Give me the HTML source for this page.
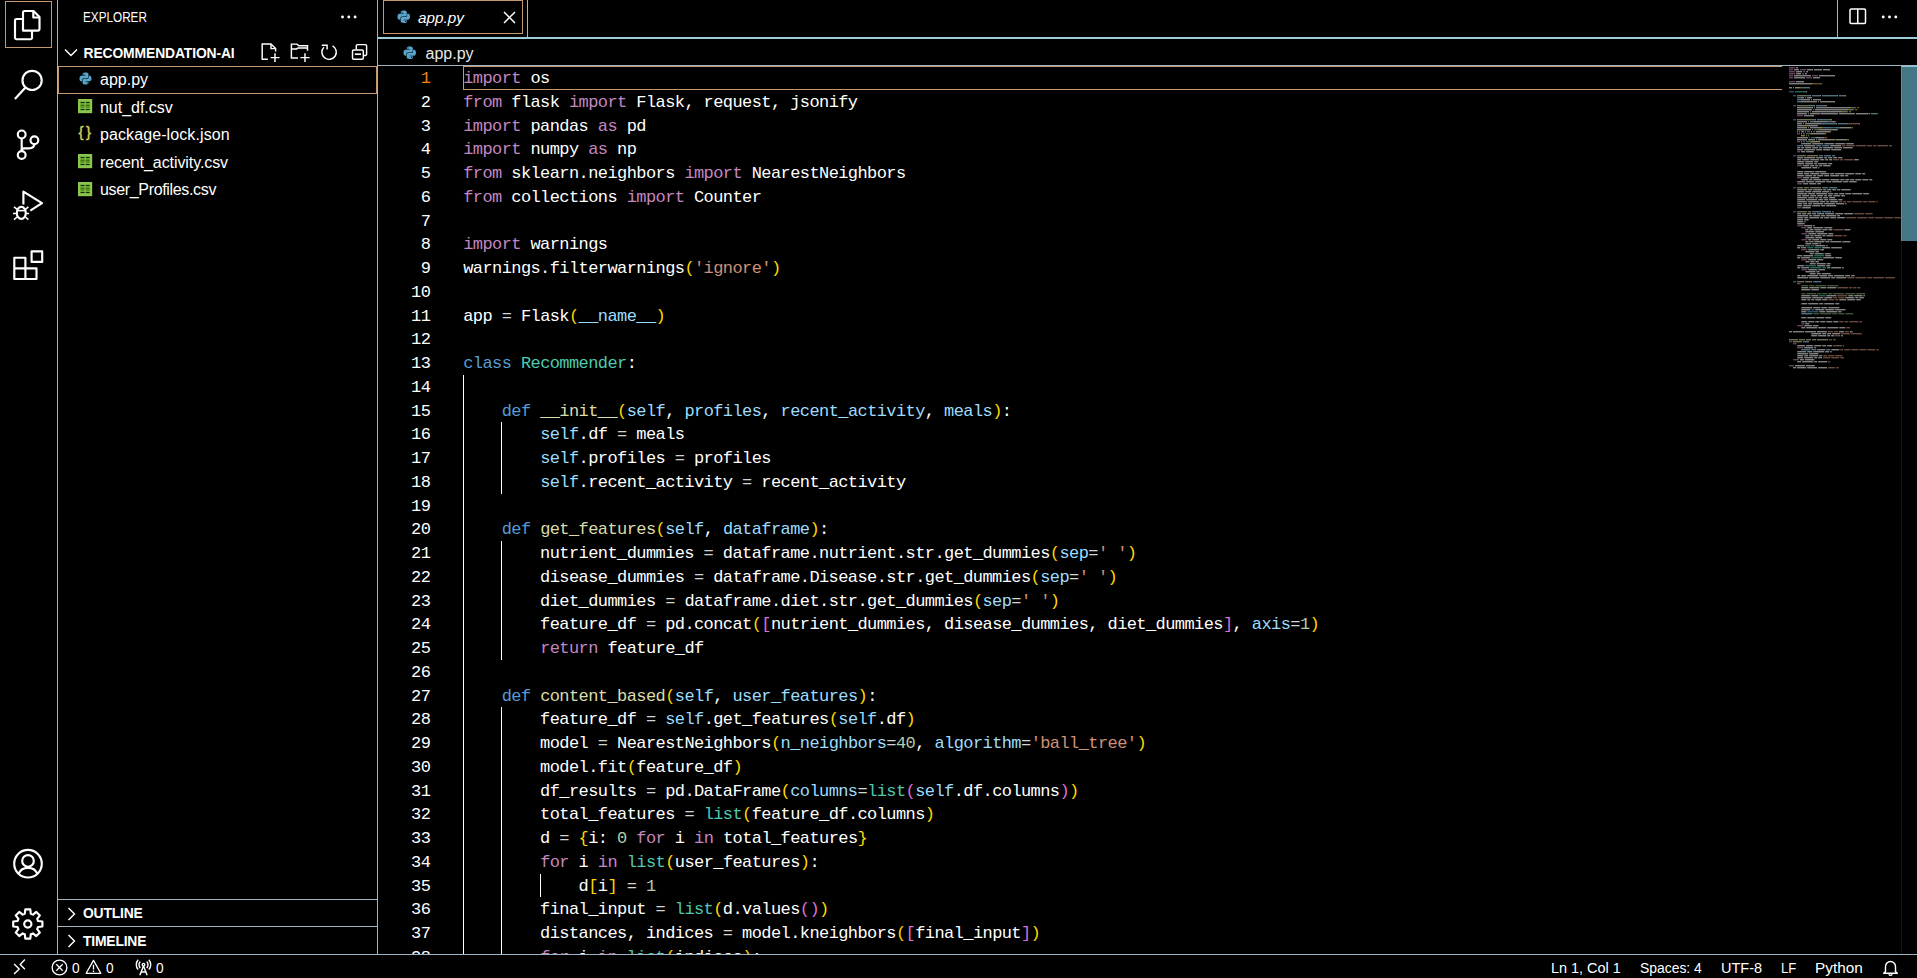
<!DOCTYPE html>
<html lang="en">
<head>
<meta charset="utf-8">
<title>app.py - recommendation-ai - Visual Studio Code</title>
<style>
html,body{margin:0;padding:0;background:#000;}
body{width:1917px;height:978px;overflow:hidden;position:relative;color:#fff;font-family:"Liberation Sans",sans-serif;font-size:15.4px;}
*{box-sizing:border-box;}
.abs{position:absolute;}
svg{display:block;overflow:visible;}
:root{--bd:#a0b6c4;--bd2:#9dcddb;--fo:#c4986a;}
/* activity bar */
#act{left:0;top:0;width:58px;height:954px;border-right:1px solid var(--bd);}
#act .sel{left:5px;top:1px;width:47px;height:47px;border:1px solid var(--fo);}
#act svg{position:absolute;}
/* sidebar */
#side{left:58px;top:0;width:320px;height:954px;border-right:1px solid var(--bd);}
#side .ttl{left:25px;top:8px;font-size:14px;line-height:18px;transform-origin:0 50%;transform:scaleX(.838);white-space:nowrap;}
#side .hdr{left:25.5px;top:44px;font-size:13.9px;line-height:18px;font-weight:bold;letter-spacing:-0.13px;}
.frow{left:0;width:319px;height:28px;}
.frow .nm{position:absolute;left:42px;top:5px;line-height:20px;white-space:nowrap;font-size:16px;}
.frow.sel{border:1px solid var(--fo);}
.pane{left:0;width:319px;border-top:1px solid var(--bd);}
.pane .nm{position:absolute;left:25px;top:5px;font-size:13.9px;line-height:18px;font-weight:bold;letter-spacing:-0.2px;}
/* editor */
#tabs{left:378px;top:0;width:1539px;height:39px;border-bottom:2px solid var(--bd2);}
#tab{left:0;top:0;width:150px;height:37px;border-right:1px solid var(--bd);}
#tab .box{left:5px;top:0;width:140px;height:34px;border:1px solid var(--fo);}
#tab .nm{left:40px;top:8px;font-style:italic;line-height:20px;font-size:15.3px;}
#crumbs{left:378px;top:39px;width:1539px;height:27px;border-bottom:1px solid var(--bd);}
#crumbs .nm{left:47.5px;top:5px;line-height:20px;font-size:16px;color:#e8e8e8;}
#code{left:378px;top:66px;width:1410px;height:888px;overflow:hidden;font-family:"Liberation Mono",monospace;font-size:17px;letter-spacing:-0.5853px;}
.row{position:absolute;left:0;height:23.75px;line-height:23.75px;white-space:pre;width:1410px;}
.ln{position:absolute;left:0;width:52.3px;text-align:right;color:#fff;}
.ln.cur{color:#f38518;}
.tx{position:absolute;left:85.2px;}
.k{color:#c586c0}.b{color:#569cd6}.t{color:#4ec9b0}.s{color:#ce9178}.n{color:#b5cea8}.v{color:#9cdcfe}.f{color:#dcdcaa}.y{color:#ffd700}.p{color:#da70d6}.c{color:#87cefa}.o{color:#d4d4d4}
.g{position:absolute;width:1px;background:#fff;}
#curline{left:85px;top:0;width:1319px;height:24px;border:1px solid var(--fo);border-right:none;}
/* minimap + scrollbar */
#mini{left:1788px;top:66px;width:113px;height:888px;overflow:hidden;}
#scroll{left:1901px;top:66px;width:16px;height:175px;background:#447686;border-top:1px solid #8fc5d8;border-left:1px solid #5f8d9c;}
#sbl{left:1901px;top:241px;width:1px;height:713px;background:#141414;}
/* status */
#status{left:0;top:954px;width:1917px;height:24px;border-top:1px solid var(--bd);font-size:15.2px;}
#status .it{position:absolute;top:3.5px;line-height:18px;white-space:nowrap;transform-origin:0 50%;}
</style>
</head>
<body>
<div id="act" class="abs"><div class="sel abs"></div>
<svg width="57" height="953" viewBox="0 0 57 953" style="left:0;top:0">
<g fill="none" stroke="#fff" stroke-width="2.15" stroke-linejoin="round" stroke-linecap="butt">
<path d="M23 30.6V12.5a1.5 1.5 0 0 1 1.5-1.5h9l6 6V29.1a1.5 1.5 0 0 1-1.5 1.5z"/>
<path d="M33.3 11.5v6h6"/>
<path d="M22.5 19h-6a1.5 1.5 0 0 0-1.5 1.5v17.2a1.5 1.5 0 0 0 1.5 1.5h14a1.5 1.5 0 0 0 1.5-1.5V31"/>
<circle cx="32.1" cy="80.4" r="9.6"/>
<path d="M25.5 87.4L14.9 99"/>
<circle cx="21.7" cy="134.4" r="3.9"/><circle cx="34.4" cy="140.2" r="3.9"/><circle cx="21.7" cy="155" r="3.9"/>
<path d="M21.7 138.2V151"/><path d="M34.4 144.1c0 2.9-2.3 4.2-5.4 4.2H24.2c-1.5 0-2.5 0.7-2.5 2"/>
<path d="M23.4 204.5V191.6L42 203.2L30.3 210.6"/>
<ellipse cx="21.3" cy="212.9" rx="4.5" ry="6"/>
<path d="M17 210.6H25.6" stroke-width="1.6"/>
<path d="M16.8 213.5H13M17.2 209.3L14 206.8M17.2 217L14 219.6M25.8 213.5H29M25.4 209.3L28.4 206.8M25.4 217L28.4 219.6" stroke-width="1.6"/>
<path d="M14.3 257.7H25.4V268.3H36.5V279H14.3zM14.3 268.3H25.4V279"/>
<rect x="31.6" y="251.3" width="10.6" height="10.6"/>
<circle cx="28" cy="863.7" r="13.8"/><circle cx="28" cy="860.9" r="5.8"/>
<path d="M18.6 873.7c1.7-3.8 5-5.8 9.4-5.8s7.7 2 9.4 5.8"/>
<path d="M24.81 913.72 L25.31 909.41 L30.29 909.41 L30.79 913.72 L32.95 914.62 L36.36 911.92 L39.88 915.44 L37.18 918.85 L38.08 921.01 L42.39 921.51 L42.39 926.49 L38.08 926.99 L37.18 929.15 L39.88 932.56 L36.36 936.08 L32.95 933.38 L30.79 934.28 L30.29 938.59 L25.31 938.59 L24.81 934.28 L22.65 933.38 L19.24 936.08 L15.72 932.56 L18.42 929.15 L17.52 926.99 L13.21 926.49 L13.21 921.51 L17.52 921.01 L18.42 918.85 L15.72 915.44 L19.24 911.92 L22.65 914.62Z"/>
<circle cx="27.8" cy="924" r="3.6"/>
</g></svg></div>
<div id="side" class="abs">
<div class="ttl abs">EXPLORER</div>
<svg class="abs" style="left:282px;top:14px" width="18" height="6" viewBox="0 0 18 6"><circle cx="2.5" cy="3" r="1.45" fill="#fff"/><circle cx="8.8" cy="3" r="1.45" fill="#fff"/><circle cx="15.1" cy="3" r="1.45" fill="#fff"/></svg>
<svg class="abs" style="left:5.6px;top:48.4px" width="14" height="10" viewBox="0 0 14 10"><path d="M1 1.5L7 7.5L13 1.5" fill="none" stroke="#fff" stroke-width="1.45" stroke-linejoin="miter" stroke-width="1.5"/></svg>
<div class="hdr abs">RECOMMENDATION-AI</div>
<svg class="abs" style="left:0;top:0" width="319" height="66" viewBox="58 0 319 66"><g fill="none" stroke="#fff" stroke-width="1.45" stroke-linejoin="miter">
<path d="M267.8 59.2H262.2V44H271L275.6 48.6V51.4"/><path d="M271 44.2V48.6H275.4"/><path d="M275 53.2V62.1M270.6 57.6H279.5"/>
<path d="M298 58H291.4V44.1H297L298.8 45.8H307.5V50.8"/><path d="M291.4 48.9H296.6L298 47.9H307.5"/><path d="M305 53.2V62.1M300.5 57.6H309.6"/>
<path d="M332.6 45.9A7.2 7.2 0 1 1 323.9 47.2"/><path d="M321.8 45.2H327.1V49.6"/>
<path d="M356.3 49.6V45.8a1.2 1.2 0 0 1 1.2-1.2H365.4a1.2 1.2 0 0 1 1.2 1.2V54.2a1.2 1.2 0 0 1-1.2 1.2H363.6"/><rect x="352.5" y="50" width="10.8" height="9.2" rx="1.2"/><path d="M354.8 54.2H361" stroke-width="1.7"/>
</g></svg>
<div class="frow abs sel" style="top:66px"><svg class="abs" style="left:19.5px;top:4.5px" width="13" height="13" viewBox="0 0 16 16"><path fill="#58a4ca" fill-rule="evenodd" d="M7.9 0.6C4.2 0.6 4.4 2.2 4.4 2.2V3.9H8V4.5H3C3 4.5 0.6 4.2 0.6 7.9C0.6 11.6 2.7 11.5 2.7 11.5H4V9.7C4 9.7 3.9 7.6 6.1 7.6H9.6C9.6 7.6 11.6 7.6 11.6 5.6V2.6C11.6 2.6 11.9 0.6 7.9 0.6ZM5.9 1.7a0.7 0.7 0 1 1 0 1.4a0.7 0.7 0 0 1 0-1.4z"/><path fill="#58a4ca" fill-rule="evenodd" transform="rotate(180 8 8)" d="M7.9 0.6C4.2 0.6 4.4 2.2 4.4 2.2V3.9H8V4.5H3C3 4.5 0.6 4.2 0.6 7.9C0.6 11.6 2.7 11.5 2.7 11.5H4V9.7C4 9.7 3.9 7.6 6.1 7.6H9.6C9.6 7.6 11.6 7.6 11.6 5.6V2.6C11.6 2.6 11.9 0.6 7.9 0.6ZM5.9 1.7a0.7 0.7 0 1 1 0 1.4a0.7 0.7 0 0 1 0-1.4z"/></svg><span class="nm" style="left:41px;top:3px;letter-spacing:0px">app.py</span></div>
<div class="frow abs" style="top:93.5px"><svg class="abs" style="left:20px;top:5.5px" width="14.2" height="14.2" viewBox="0 0 15 15"><rect x="0" y="0" width="15" height="15" fill="#8cc54c"/><g fill="#5f9a26"><rect x="2.6" y="5" width="4.3" height="4.6"/><rect x="8.1" y="5" width="4.3" height="4.6"/></g><g fill="#123600"><rect x="2.6" y="3" width="4.3" height="1.4"/><rect x="8.1" y="3" width="4.3" height="1.4"/><rect x="2.6" y="6.7" width="4.3" height="0.9" fill="#2f6a08"/><rect x="8.1" y="6.7" width="4.3" height="0.9" fill="#2f6a08"/><rect x="2.6" y="10.4" width="4.3" height="1.4"/><rect x="8.1" y="10.4" width="4.3" height="1.4"/></g></svg><span class="nm" style="left:42px;top:4px;letter-spacing:-0.03px">nut_df.csv</span></div>
<div class="frow abs" style="top:121px"><span class="abs" style="left:20.5px;top:0.5px;line-height:20px;font-size:15px;font-weight:normal;color:#d6cf5c;-webkit-text-stroke:0.4px #d6cf5c;letter-spacing:2.6px">{}</span><span class="nm" style="left:42px;top:4px;letter-spacing:0.1px">package-lock.json</span></div>
<div class="frow abs" style="top:148.5px"><svg class="abs" style="left:20px;top:5.5px" width="14.2" height="14.2" viewBox="0 0 15 15"><rect x="0" y="0" width="15" height="15" fill="#8cc54c"/><g fill="#5f9a26"><rect x="2.6" y="5" width="4.3" height="4.6"/><rect x="8.1" y="5" width="4.3" height="4.6"/></g><g fill="#123600"><rect x="2.6" y="3" width="4.3" height="1.4"/><rect x="8.1" y="3" width="4.3" height="1.4"/><rect x="2.6" y="6.7" width="4.3" height="0.9" fill="#2f6a08"/><rect x="8.1" y="6.7" width="4.3" height="0.9" fill="#2f6a08"/><rect x="2.6" y="10.4" width="4.3" height="1.4"/><rect x="8.1" y="10.4" width="4.3" height="1.4"/></g></svg><span class="nm" style="left:42px;top:4px;letter-spacing:-0.08px">recent_activity.csv</span></div>
<div class="frow abs" style="top:176px"><svg class="abs" style="left:20px;top:5.5px" width="14.2" height="14.2" viewBox="0 0 15 15"><rect x="0" y="0" width="15" height="15" fill="#8cc54c"/><g fill="#5f9a26"><rect x="2.6" y="5" width="4.3" height="4.6"/><rect x="8.1" y="5" width="4.3" height="4.6"/></g><g fill="#123600"><rect x="2.6" y="3" width="4.3" height="1.4"/><rect x="8.1" y="3" width="4.3" height="1.4"/><rect x="2.6" y="6.7" width="4.3" height="0.9" fill="#2f6a08"/><rect x="8.1" y="6.7" width="4.3" height="0.9" fill="#2f6a08"/><rect x="2.6" y="10.4" width="4.3" height="1.4"/><rect x="8.1" y="10.4" width="4.3" height="1.4"/></g></svg><span class="nm" style="left:42px;top:4px;letter-spacing:-0.34px">user_Profiles.csv</span></div>
<div class="pane abs" style="top:899px;height:28px"><svg class="abs" style="left:8.5px;top:7px" width="9" height="14" viewBox="0 0 9 14"><path d="M1.5 1L7.5 7L1.5 13" fill="none" stroke="#fff" stroke-width="1.45" stroke-linejoin="miter" stroke-width="1.5"/></svg><span class="nm" style="top:4px">OUTLINE</span></div>
<div class="pane abs" style="top:926px;height:28px"><svg class="abs" style="left:8.5px;top:7px" width="9" height="14" viewBox="0 0 9 14"><path d="M1.5 1L7.5 7L1.5 13" fill="none" stroke="#fff" stroke-width="1.45" stroke-linejoin="miter" stroke-width="1.5"/></svg><span class="nm" style="top:5px">TIMELINE</span></div>
</div>
<div id="tabs" class="abs"><div id="tab" class="abs"><div class="box abs"></div><svg class="abs" style="left:19px;top:10px" width="13.5" height="13.5" viewBox="0 0 16 16"><path fill="#58a4ca" fill-rule="evenodd" d="M7.9 0.6C4.2 0.6 4.4 2.2 4.4 2.2V3.9H8V4.5H3C3 4.5 0.6 4.2 0.6 7.9C0.6 11.6 2.7 11.5 2.7 11.5H4V9.7C4 9.7 3.9 7.6 6.1 7.6H9.6C9.6 7.6 11.6 7.6 11.6 5.6V2.6C11.6 2.6 11.9 0.6 7.9 0.6ZM5.9 1.7a0.7 0.7 0 1 1 0 1.4a0.7 0.7 0 0 1 0-1.4z"/><path fill="#58a4ca" fill-rule="evenodd" transform="rotate(180 8 8)" d="M7.9 0.6C4.2 0.6 4.4 2.2 4.4 2.2V3.9H8V4.5H3C3 4.5 0.6 4.2 0.6 7.9C0.6 11.6 2.7 11.5 2.7 11.5H4V9.7C4 9.7 3.9 7.6 6.1 7.6H9.6C9.6 7.6 11.6 7.6 11.6 5.6V2.6C11.6 2.6 11.9 0.6 7.9 0.6ZM5.9 1.7a0.7 0.7 0 1 1 0 1.4a0.7 0.7 0 0 1 0-1.4z"/></svg><div class="nm abs">app.py</div>
<svg class="abs" style="left:125px;top:11px" width="13" height="13" viewBox="0 0 13 13"><path d="M1 1L12 12M12 1L1 12" fill="none" stroke="#fff" stroke-width="1.5"/></svg></div>
<div class="abs" style="left:1459px;top:0;width:1px;height:37px;background:var(--bd)"></div>
<svg class="abs" style="left:1470.8px;top:8px" width="18" height="17" viewBox="0 0 18 17"><rect x="1" y="1" width="15.5" height="14.5" rx="1.2" fill="none" stroke="#fff" stroke-width="1.5"/><path d="M8.75 1V15.5" stroke="#fff" stroke-width="1.5"/></svg>
<svg class="abs" style="left:1503px;top:14px" width="18" height="6" viewBox="0 0 18 6"><circle cx="2.2" cy="3" r="1.45" fill="#fff"/><circle cx="8.5" cy="3" r="1.45" fill="#fff"/><circle cx="14.8" cy="3" r="1.45" fill="#fff"/></svg>
</div>
<div id="crumbs" class="abs"><svg class="abs" style="left:25px;top:7px" width="13.5" height="13.5" viewBox="0 0 16 16"><path fill="#58a4ca" fill-rule="evenodd" d="M7.9 0.6C4.2 0.6 4.4 2.2 4.4 2.2V3.9H8V4.5H3C3 4.5 0.6 4.2 0.6 7.9C0.6 11.6 2.7 11.5 2.7 11.5H4V9.7C4 9.7 3.9 7.6 6.1 7.6H9.6C9.6 7.6 11.6 7.6 11.6 5.6V2.6C11.6 2.6 11.9 0.6 7.9 0.6ZM5.9 1.7a0.7 0.7 0 1 1 0 1.4a0.7 0.7 0 0 1 0-1.4z"/><path fill="#58a4ca" fill-rule="evenodd" transform="rotate(180 8 8)" d="M7.9 0.6C4.2 0.6 4.4 2.2 4.4 2.2V3.9H8V4.5H3C3 4.5 0.6 4.2 0.6 7.9C0.6 11.6 2.7 11.5 2.7 11.5H4V9.7C4 9.7 3.9 7.6 6.1 7.6H9.6C9.6 7.6 11.6 7.6 11.6 5.6V2.6C11.6 2.6 11.9 0.6 7.9 0.6ZM5.9 1.7a0.7 0.7 0 1 1 0 1.4a0.7 0.7 0 0 1 0-1.4z"/></svg><div class="nm abs">app.py</div></div>
<div id="code" class="abs"><div id="curline" class="abs"></div>
<div class="g" style="left:85px;top:308.75px;height:617.50px"></div>
<div class="g" style="left:123.467px;top:356.25px;height:71.25px"></div>
<div class="g" style="left:123.467px;top:475.00px;height:118.75px"></div>
<div class="g" style="left:123.467px;top:641.25px;height:285.00px"></div>
<div class="g" style="left:161.934px;top:807.50px;height:23.75px"></div>
<div class="row" style="top:1.00px"><span class="ln cur">1</span><span class="tx"><span class="k">import</span> os</span></div>
<div class="row" style="top:24.75px"><span class="ln">2</span><span class="tx"><span class="k">from</span> flask <span class="k">import</span> Flask, request, jsonify</span></div>
<div class="row" style="top:48.50px"><span class="ln">3</span><span class="tx"><span class="k">import</span> pandas <span class="k">as</span> pd</span></div>
<div class="row" style="top:72.25px"><span class="ln">4</span><span class="tx"><span class="k">import</span> numpy <span class="k">as</span> np</span></div>
<div class="row" style="top:96.00px"><span class="ln">5</span><span class="tx"><span class="k">from</span> sklearn.neighbors <span class="k">import</span> NearestNeighbors</span></div>
<div class="row" style="top:119.75px"><span class="ln">6</span><span class="tx"><span class="k">from</span> collections <span class="k">import</span> Counter</span></div>
<div class="row" style="top:143.50px"><span class="ln">7</span><span class="tx"></span></div>
<div class="row" style="top:167.25px"><span class="ln">8</span><span class="tx"><span class="k">import</span> warnings</span></div>
<div class="row" style="top:191.00px"><span class="ln">9</span><span class="tx">warnings.filterwarnings<span class="y">(</span><span class="s">'ignore'</span><span class="y">)</span></span></div>
<div class="row" style="top:214.75px"><span class="ln">10</span><span class="tx"></span></div>
<div class="row" style="top:238.50px"><span class="ln">11</span><span class="tx">app <span class="o">=</span> Flask<span class="y">(</span><span class="v">__name__</span><span class="y">)</span></span></div>
<div class="row" style="top:262.25px"><span class="ln">12</span><span class="tx"></span></div>
<div class="row" style="top:286.00px"><span class="ln">13</span><span class="tx"><span class="b">class</span> <span class="t">Recommender</span>:</span></div>
<div class="row" style="top:309.75px"><span class="ln">14</span><span class="tx"></span></div>
<div class="row" style="top:333.50px"><span class="ln">15</span><span class="tx">    <span class="b">def</span> <span class="f">__init__</span><span class="y">(</span><span class="v">self</span>, <span class="v">profiles</span>, <span class="v">recent_activity</span>, <span class="v">meals</span><span class="y">)</span>:</span></div>
<div class="row" style="top:357.25px"><span class="ln">16</span><span class="tx">        <span class="v">self</span>.df <span class="o">=</span> meals</span></div>
<div class="row" style="top:381.00px"><span class="ln">17</span><span class="tx">        <span class="v">self</span>.profiles <span class="o">=</span> profiles</span></div>
<div class="row" style="top:404.75px"><span class="ln">18</span><span class="tx">        <span class="v">self</span>.recent_activity <span class="o">=</span> recent_activity</span></div>
<div class="row" style="top:428.50px"><span class="ln">19</span><span class="tx"></span></div>
<div class="row" style="top:452.25px"><span class="ln">20</span><span class="tx">    <span class="b">def</span> <span class="f">get_features</span><span class="y">(</span><span class="v">self</span>, <span class="v">dataframe</span><span class="y">)</span>:</span></div>
<div class="row" style="top:476.00px"><span class="ln">21</span><span class="tx">        nutrient_dummies <span class="o">=</span> dataframe.nutrient.str.get_dummies<span class="y">(</span><span class="v">sep</span><span class="o">=</span><span class="s">' '</span><span class="y">)</span></span></div>
<div class="row" style="top:499.75px"><span class="ln">22</span><span class="tx">        disease_dummies <span class="o">=</span> dataframe.Disease.str.get_dummies<span class="y">(</span><span class="v">sep</span><span class="o">=</span><span class="s">' '</span><span class="y">)</span></span></div>
<div class="row" style="top:523.50px"><span class="ln">23</span><span class="tx">        diet_dummies <span class="o">=</span> dataframe.diet.str.get_dummies<span class="y">(</span><span class="v">sep</span><span class="o">=</span><span class="s">' '</span><span class="y">)</span></span></div>
<div class="row" style="top:547.25px"><span class="ln">24</span><span class="tx">        feature_df <span class="o">=</span> pd.concat<span class="y">(</span><span class="p">[</span>nutrient_dummies, disease_dummies, diet_dummies<span class="p">]</span>, <span class="v">axis</span><span class="o">=</span><span class="n">1</span><span class="y">)</span></span></div>
<div class="row" style="top:571.00px"><span class="ln">25</span><span class="tx">        <span class="k">return</span> feature_df</span></div>
<div class="row" style="top:594.75px"><span class="ln">26</span><span class="tx"></span></div>
<div class="row" style="top:618.50px"><span class="ln">27</span><span class="tx">    <span class="b">def</span> <span class="f">content_based</span><span class="y">(</span><span class="v">self</span>, <span class="v">user_features</span><span class="y">)</span>:</span></div>
<div class="row" style="top:642.25px"><span class="ln">28</span><span class="tx">        feature_df <span class="o">=</span> <span class="v">self</span>.get_features<span class="y">(</span><span class="v">self</span>.df<span class="y">)</span></span></div>
<div class="row" style="top:666.00px"><span class="ln">29</span><span class="tx">        model <span class="o">=</span> NearestNeighbors<span class="y">(</span><span class="v">n_neighbors</span><span class="o">=</span><span class="n">40</span>, <span class="v">algorithm</span><span class="o">=</span><span class="s">'ball_tree'</span><span class="y">)</span></span></div>
<div class="row" style="top:689.75px"><span class="ln">30</span><span class="tx">        model.fit<span class="y">(</span>feature_df<span class="y">)</span></span></div>
<div class="row" style="top:713.50px"><span class="ln">31</span><span class="tx">        df_results <span class="o">=</span> pd.DataFrame<span class="y">(</span><span class="v">columns</span><span class="o">=</span><span class="t">list</span><span class="p">(</span><span class="v">self</span>.df.columns<span class="p">)</span><span class="y">)</span></span></div>
<div class="row" style="top:737.25px"><span class="ln">32</span><span class="tx">        total_features <span class="o">=</span> <span class="t">list</span><span class="y">(</span>feature_df.columns<span class="y">)</span></span></div>
<div class="row" style="top:761.00px"><span class="ln">33</span><span class="tx">        d <span class="o">=</span> <span class="y">{</span>i: <span class="n">0</span> <span class="k">for</span> i <span class="k">in</span> total_features<span class="y">}</span></span></div>
<div class="row" style="top:784.75px"><span class="ln">34</span><span class="tx">        <span class="k">for</span> i <span class="k">in</span> <span class="t">list</span><span class="y">(</span>user_features<span class="y">)</span>:</span></div>
<div class="row" style="top:808.50px"><span class="ln">35</span><span class="tx">            d<span class="y">[</span>i<span class="y">]</span> <span class="o">=</span> <span class="n">1</span></span></div>
<div class="row" style="top:832.25px"><span class="ln">36</span><span class="tx">        final_input <span class="o">=</span> <span class="t">list</span><span class="y">(</span>d.values<span class="p">()</span><span class="y">)</span></span></div>
<div class="row" style="top:856.00px"><span class="ln">37</span><span class="tx">        distances, indices <span class="o">=</span> model.kneighbors<span class="y">(</span><span class="p">[</span>final_input<span class="p">]</span><span class="y">)</span></span></div>
<div class="row" style="top:879.75px"><span class="ln">38</span><span class="tx">        <span class="k">for</span> i <span class="k">in</span> <span class="t">list</span><span class="y">(</span>indices<span class="y">)</span>:</span></div>
</div>
<div id="mini" class="abs"><svg width="113" height="888" viewBox="0 0 113 888" opacity="0.5">
<rect x="1.0" y="1.0" width="6.0" height="1.4" fill="#c586c0"/>
<rect x="8.0" y="1.0" width="2.0" height="1.4" fill="#ffffff"/>
<rect x="1.0" y="3.0" width="4.0" height="1.4" fill="#c586c0"/>
<rect x="6.0" y="3.0" width="5.0" height="1.4" fill="#ffffff"/>
<rect x="12.0" y="3.0" width="6.0" height="1.4" fill="#c586c0"/>
<rect x="19.0" y="3.0" width="6.0" height="1.4" fill="#ffffff"/>
<rect x="26.0" y="3.0" width="8.0" height="1.4" fill="#ffffff"/>
<rect x="35.0" y="3.0" width="7.0" height="1.4" fill="#ffffff"/>
<rect x="1.0" y="5.0" width="6.0" height="1.4" fill="#c586c0"/>
<rect x="8.0" y="5.0" width="6.0" height="1.4" fill="#ffffff"/>
<rect x="15.0" y="5.0" width="2.0" height="1.4" fill="#c586c0"/>
<rect x="18.0" y="5.0" width="2.0" height="1.4" fill="#ffffff"/>
<rect x="1.0" y="7.0" width="6.0" height="1.4" fill="#c586c0"/>
<rect x="8.0" y="7.0" width="5.0" height="1.4" fill="#ffffff"/>
<rect x="14.0" y="7.0" width="2.0" height="1.4" fill="#c586c0"/>
<rect x="17.0" y="7.0" width="2.0" height="1.4" fill="#ffffff"/>
<rect x="1.0" y="9.0" width="4.0" height="1.4" fill="#c586c0"/>
<rect x="6.0" y="9.0" width="17.0" height="1.4" fill="#ffffff"/>
<rect x="24.0" y="9.0" width="6.0" height="1.4" fill="#c586c0"/>
<rect x="31.0" y="9.0" width="16.0" height="1.4" fill="#ffffff"/>
<rect x="1.0" y="11.0" width="4.0" height="1.4" fill="#c586c0"/>
<rect x="6.0" y="11.0" width="11.0" height="1.4" fill="#ffffff"/>
<rect x="18.0" y="11.0" width="6.0" height="1.4" fill="#c586c0"/>
<rect x="25.0" y="11.0" width="7.0" height="1.4" fill="#ffffff"/>
<rect x="1.0" y="15.0" width="6.0" height="1.4" fill="#c586c0"/>
<rect x="8.0" y="15.0" width="8.0" height="1.4" fill="#ffffff"/>
<rect x="1.0" y="17.0" width="23.0" height="1.4" fill="#ffffff"/>
<rect x="24.0" y="17.0" width="1.0" height="1.4" fill="#ffd700"/>
<rect x="25.0" y="17.0" width="8.0" height="1.4" fill="#ce9178"/>
<rect x="33.0" y="17.0" width="1.0" height="1.4" fill="#ffd700"/>
<rect x="1.0" y="21.0" width="3.0" height="1.4" fill="#ffffff"/>
<rect x="5.0" y="21.0" width="1.0" height="1.4" fill="#d4d4d4"/>
<rect x="7.0" y="21.0" width="5.0" height="1.4" fill="#ffffff"/>
<rect x="12.0" y="21.0" width="1.0" height="1.4" fill="#ffd700"/>
<rect x="13.0" y="21.0" width="8.0" height="1.4" fill="#9cdcfe"/>
<rect x="21.0" y="21.0" width="1.0" height="1.4" fill="#ffd700"/>
<rect x="1.0" y="25.0" width="5.0" height="1.4" fill="#569cd6"/>
<rect x="7.0" y="25.0" width="11.0" height="1.4" fill="#4ec9b0"/>
<rect x="18.0" y="25.0" width="1.0" height="1.4" fill="#ffffff"/>
<rect x="5.0" y="29.0" width="3.0" height="1.4" fill="#569cd6"/>
<rect x="9.0" y="29.0" width="8.0" height="1.4" fill="#dcdcaa"/>
<rect x="17.0" y="29.0" width="1.0" height="1.4" fill="#ffd700"/>
<rect x="18.0" y="29.0" width="4.0" height="1.4" fill="#9cdcfe"/>
<rect x="22.0" y="29.0" width="1.0" height="1.4" fill="#ffffff"/>
<rect x="24.0" y="29.0" width="8.0" height="1.4" fill="#9cdcfe"/>
<rect x="32.0" y="29.0" width="1.0" height="1.4" fill="#ffffff"/>
<rect x="34.0" y="29.0" width="15.0" height="1.4" fill="#9cdcfe"/>
<rect x="49.0" y="29.0" width="1.0" height="1.4" fill="#ffffff"/>
<rect x="51.0" y="29.0" width="5.0" height="1.4" fill="#9cdcfe"/>
<rect x="56.0" y="29.0" width="1.0" height="1.4" fill="#ffd700"/>
<rect x="57.0" y="29.0" width="1.0" height="1.4" fill="#ffffff"/>
<rect x="9.0" y="31.0" width="4.0" height="1.4" fill="#9cdcfe"/>
<rect x="13.0" y="31.0" width="3.0" height="1.4" fill="#ffffff"/>
<rect x="17.0" y="31.0" width="1.0" height="1.4" fill="#d4d4d4"/>
<rect x="19.0" y="31.0" width="5.0" height="1.4" fill="#ffffff"/>
<rect x="9.0" y="33.0" width="4.0" height="1.4" fill="#9cdcfe"/>
<rect x="13.0" y="33.0" width="9.0" height="1.4" fill="#ffffff"/>
<rect x="23.0" y="33.0" width="1.0" height="1.4" fill="#d4d4d4"/>
<rect x="25.0" y="33.0" width="8.0" height="1.4" fill="#ffffff"/>
<rect x="9.0" y="35.0" width="4.0" height="1.4" fill="#9cdcfe"/>
<rect x="13.0" y="35.0" width="16.0" height="1.4" fill="#ffffff"/>
<rect x="30.0" y="35.0" width="1.0" height="1.4" fill="#d4d4d4"/>
<rect x="32.0" y="35.0" width="15.0" height="1.4" fill="#ffffff"/>
<rect x="5.0" y="39.0" width="3.0" height="1.4" fill="#569cd6"/>
<rect x="9.0" y="39.0" width="12.0" height="1.4" fill="#dcdcaa"/>
<rect x="21.0" y="39.0" width="1.0" height="1.4" fill="#ffd700"/>
<rect x="22.0" y="39.0" width="4.0" height="1.4" fill="#9cdcfe"/>
<rect x="26.0" y="39.0" width="1.0" height="1.4" fill="#ffffff"/>
<rect x="28.0" y="39.0" width="9.0" height="1.4" fill="#9cdcfe"/>
<rect x="37.0" y="39.0" width="1.0" height="1.4" fill="#ffd700"/>
<rect x="38.0" y="39.0" width="1.0" height="1.4" fill="#ffffff"/>
<rect x="9.0" y="41.0" width="16.0" height="1.4" fill="#ffffff"/>
<rect x="26.0" y="41.0" width="1.0" height="1.4" fill="#d4d4d4"/>
<rect x="28.0" y="41.0" width="34.0" height="1.4" fill="#ffffff"/>
<rect x="62.0" y="41.0" width="1.0" height="1.4" fill="#ffd700"/>
<rect x="63.0" y="41.0" width="3.0" height="1.4" fill="#9cdcfe"/>
<rect x="66.0" y="41.0" width="1.0" height="1.4" fill="#d4d4d4"/>
<rect x="67.0" y="41.0" width="1.0" height="1.4" fill="#ce9178"/>
<rect x="69.0" y="41.0" width="1.0" height="1.4" fill="#ce9178"/>
<rect x="70.0" y="41.0" width="1.0" height="1.4" fill="#ffd700"/>
<rect x="9.0" y="43.0" width="15.0" height="1.4" fill="#ffffff"/>
<rect x="25.0" y="43.0" width="1.0" height="1.4" fill="#d4d4d4"/>
<rect x="27.0" y="43.0" width="33.0" height="1.4" fill="#ffffff"/>
<rect x="60.0" y="43.0" width="1.0" height="1.4" fill="#ffd700"/>
<rect x="61.0" y="43.0" width="3.0" height="1.4" fill="#9cdcfe"/>
<rect x="64.0" y="43.0" width="1.0" height="1.4" fill="#d4d4d4"/>
<rect x="65.0" y="43.0" width="1.0" height="1.4" fill="#ce9178"/>
<rect x="67.0" y="43.0" width="1.0" height="1.4" fill="#ce9178"/>
<rect x="68.0" y="43.0" width="1.0" height="1.4" fill="#ffd700"/>
<rect x="9.0" y="45.0" width="12.0" height="1.4" fill="#ffffff"/>
<rect x="22.0" y="45.0" width="1.0" height="1.4" fill="#d4d4d4"/>
<rect x="24.0" y="45.0" width="30.0" height="1.4" fill="#ffffff"/>
<rect x="54.0" y="45.0" width="1.0" height="1.4" fill="#ffd700"/>
<rect x="55.0" y="45.0" width="3.0" height="1.4" fill="#9cdcfe"/>
<rect x="58.0" y="45.0" width="1.0" height="1.4" fill="#d4d4d4"/>
<rect x="59.0" y="45.0" width="1.0" height="1.4" fill="#ce9178"/>
<rect x="61.0" y="45.0" width="1.0" height="1.4" fill="#ce9178"/>
<rect x="62.0" y="45.0" width="1.0" height="1.4" fill="#ffd700"/>
<rect x="9.0" y="47.0" width="10.0" height="1.4" fill="#ffffff"/>
<rect x="20.0" y="47.0" width="1.0" height="1.4" fill="#d4d4d4"/>
<rect x="22.0" y="47.0" width="9.0" height="1.4" fill="#ffffff"/>
<rect x="31.0" y="47.0" width="1.0" height="1.4" fill="#ffd700"/>
<rect x="32.0" y="47.0" width="1.0" height="1.4" fill="#da70d6"/>
<rect x="33.0" y="47.0" width="17.0" height="1.4" fill="#ffffff"/>
<rect x="51.0" y="47.0" width="16.0" height="1.4" fill="#ffffff"/>
<rect x="68.0" y="47.0" width="12.0" height="1.4" fill="#ffffff"/>
<rect x="80.0" y="47.0" width="1.0" height="1.4" fill="#da70d6"/>
<rect x="81.0" y="47.0" width="1.0" height="1.4" fill="#ffffff"/>
<rect x="83.0" y="47.0" width="4.0" height="1.4" fill="#9cdcfe"/>
<rect x="87.0" y="47.0" width="1.0" height="1.4" fill="#d4d4d4"/>
<rect x="88.0" y="47.0" width="1.0" height="1.4" fill="#b5cea8"/>
<rect x="89.0" y="47.0" width="1.0" height="1.4" fill="#ffd700"/>
<rect x="9.0" y="49.0" width="6.0" height="1.4" fill="#c586c0"/>
<rect x="16.0" y="49.0" width="10.0" height="1.4" fill="#ffffff"/>
<rect x="5.0" y="53.0" width="3.0" height="1.4" fill="#569cd6"/>
<rect x="9.0" y="53.0" width="13.0" height="1.4" fill="#dcdcaa"/>
<rect x="22.0" y="53.0" width="1.0" height="1.4" fill="#ffd700"/>
<rect x="23.0" y="53.0" width="4.0" height="1.4" fill="#9cdcfe"/>
<rect x="27.0" y="53.0" width="1.0" height="1.4" fill="#ffffff"/>
<rect x="29.0" y="53.0" width="13.0" height="1.4" fill="#9cdcfe"/>
<rect x="42.0" y="53.0" width="1.0" height="1.4" fill="#ffd700"/>
<rect x="43.0" y="53.0" width="1.0" height="1.4" fill="#ffffff"/>
<rect x="9.0" y="55.0" width="10.0" height="1.4" fill="#ffffff"/>
<rect x="20.0" y="55.0" width="1.0" height="1.4" fill="#d4d4d4"/>
<rect x="22.0" y="55.0" width="4.0" height="1.4" fill="#9cdcfe"/>
<rect x="26.0" y="55.0" width="13.0" height="1.4" fill="#ffffff"/>
<rect x="39.0" y="55.0" width="1.0" height="1.4" fill="#ffd700"/>
<rect x="40.0" y="55.0" width="4.0" height="1.4" fill="#9cdcfe"/>
<rect x="44.0" y="55.0" width="3.0" height="1.4" fill="#ffffff"/>
<rect x="47.0" y="55.0" width="1.0" height="1.4" fill="#ffd700"/>
<rect x="9.0" y="57.0" width="5.0" height="1.4" fill="#ffffff"/>
<rect x="15.0" y="57.0" width="1.0" height="1.4" fill="#d4d4d4"/>
<rect x="17.0" y="57.0" width="16.0" height="1.4" fill="#ffffff"/>
<rect x="33.0" y="57.0" width="1.0" height="1.4" fill="#ffd700"/>
<rect x="34.0" y="57.0" width="11.0" height="1.4" fill="#9cdcfe"/>
<rect x="45.0" y="57.0" width="1.0" height="1.4" fill="#d4d4d4"/>
<rect x="46.0" y="57.0" width="2.0" height="1.4" fill="#b5cea8"/>
<rect x="48.0" y="57.0" width="1.0" height="1.4" fill="#ffffff"/>
<rect x="50.0" y="57.0" width="9.0" height="1.4" fill="#9cdcfe"/>
<rect x="59.0" y="57.0" width="1.0" height="1.4" fill="#d4d4d4"/>
<rect x="60.0" y="57.0" width="11.0" height="1.4" fill="#ce9178"/>
<rect x="71.0" y="57.0" width="1.0" height="1.4" fill="#ffd700"/>
<rect x="9.0" y="59.0" width="9.0" height="1.4" fill="#ffffff"/>
<rect x="18.0" y="59.0" width="1.0" height="1.4" fill="#ffd700"/>
<rect x="19.0" y="59.0" width="10.0" height="1.4" fill="#ffffff"/>
<rect x="29.0" y="59.0" width="1.0" height="1.4" fill="#ffd700"/>
<rect x="9.0" y="61.0" width="10.0" height="1.4" fill="#ffffff"/>
<rect x="20.0" y="61.0" width="1.0" height="1.4" fill="#d4d4d4"/>
<rect x="22.0" y="61.0" width="12.0" height="1.4" fill="#ffffff"/>
<rect x="34.0" y="61.0" width="1.0" height="1.4" fill="#ffd700"/>
<rect x="35.0" y="61.0" width="7.0" height="1.4" fill="#9cdcfe"/>
<rect x="42.0" y="61.0" width="1.0" height="1.4" fill="#d4d4d4"/>
<rect x="43.0" y="61.0" width="4.0" height="1.4" fill="#4ec9b0"/>
<rect x="47.0" y="61.0" width="1.0" height="1.4" fill="#da70d6"/>
<rect x="48.0" y="61.0" width="4.0" height="1.4" fill="#9cdcfe"/>
<rect x="52.0" y="61.0" width="11.0" height="1.4" fill="#ffffff"/>
<rect x="63.0" y="61.0" width="1.0" height="1.4" fill="#da70d6"/>
<rect x="64.0" y="61.0" width="1.0" height="1.4" fill="#ffd700"/>
<rect x="9.0" y="63.0" width="14.0" height="1.4" fill="#ffffff"/>
<rect x="24.0" y="63.0" width="1.0" height="1.4" fill="#d4d4d4"/>
<rect x="26.0" y="63.0" width="4.0" height="1.4" fill="#4ec9b0"/>
<rect x="30.0" y="63.0" width="1.0" height="1.4" fill="#ffd700"/>
<rect x="31.0" y="63.0" width="18.0" height="1.4" fill="#ffffff"/>
<rect x="49.0" y="63.0" width="1.0" height="1.4" fill="#ffd700"/>
<rect x="9.0" y="65.0" width="1.0" height="1.4" fill="#ffffff"/>
<rect x="11.0" y="65.0" width="1.0" height="1.4" fill="#d4d4d4"/>
<rect x="13.0" y="65.0" width="1.0" height="1.4" fill="#ffd700"/>
<rect x="14.0" y="65.0" width="2.0" height="1.4" fill="#ffffff"/>
<rect x="17.0" y="65.0" width="1.0" height="1.4" fill="#b5cea8"/>
<rect x="19.0" y="65.0" width="3.0" height="1.4" fill="#c586c0"/>
<rect x="23.0" y="65.0" width="1.0" height="1.4" fill="#ffffff"/>
<rect x="25.0" y="65.0" width="2.0" height="1.4" fill="#c586c0"/>
<rect x="28.0" y="65.0" width="14.0" height="1.4" fill="#ffffff"/>
<rect x="42.0" y="65.0" width="1.0" height="1.4" fill="#ffd700"/>
<rect x="9.0" y="67.0" width="3.0" height="1.4" fill="#c586c0"/>
<rect x="13.0" y="67.0" width="1.0" height="1.4" fill="#ffffff"/>
<rect x="15.0" y="67.0" width="2.0" height="1.4" fill="#c586c0"/>
<rect x="18.0" y="67.0" width="4.0" height="1.4" fill="#4ec9b0"/>
<rect x="22.0" y="67.0" width="1.0" height="1.4" fill="#ffd700"/>
<rect x="23.0" y="67.0" width="13.0" height="1.4" fill="#ffffff"/>
<rect x="36.0" y="67.0" width="1.0" height="1.4" fill="#ffd700"/>
<rect x="37.0" y="67.0" width="1.0" height="1.4" fill="#ffffff"/>
<rect x="13.0" y="69.0" width="1.0" height="1.4" fill="#ffffff"/>
<rect x="14.0" y="69.0" width="1.0" height="1.4" fill="#ffd700"/>
<rect x="15.0" y="69.0" width="1.0" height="1.4" fill="#ffffff"/>
<rect x="16.0" y="69.0" width="1.0" height="1.4" fill="#ffd700"/>
<rect x="18.0" y="69.0" width="1.0" height="1.4" fill="#d4d4d4"/>
<rect x="20.0" y="69.0" width="1.0" height="1.4" fill="#b5cea8"/>
<rect x="9.0" y="71.0" width="11.0" height="1.4" fill="#ffffff"/>
<rect x="21.0" y="71.0" width="1.0" height="1.4" fill="#d4d4d4"/>
<rect x="23.0" y="71.0" width="4.0" height="1.4" fill="#4ec9b0"/>
<rect x="27.0" y="71.0" width="1.0" height="1.4" fill="#ffd700"/>
<rect x="28.0" y="71.0" width="8.0" height="1.4" fill="#ffffff"/>
<rect x="36.0" y="71.0" width="2.0" height="1.4" fill="#da70d6"/>
<rect x="38.0" y="71.0" width="1.0" height="1.4" fill="#ffd700"/>
<rect x="9.0" y="73.0" width="10.0" height="1.4" fill="#ffffff"/>
<rect x="20.0" y="73.0" width="7.0" height="1.4" fill="#ffffff"/>
<rect x="28.0" y="73.0" width="1.0" height="1.4" fill="#d4d4d4"/>
<rect x="30.0" y="73.0" width="16.0" height="1.4" fill="#ffffff"/>
<rect x="46.0" y="73.0" width="1.0" height="1.4" fill="#ffd700"/>
<rect x="47.0" y="73.0" width="1.0" height="1.4" fill="#da70d6"/>
<rect x="48.0" y="73.0" width="11.0" height="1.4" fill="#ffffff"/>
<rect x="59.0" y="73.0" width="1.0" height="1.4" fill="#da70d6"/>
<rect x="60.0" y="73.0" width="1.0" height="1.4" fill="#ffd700"/>
<rect x="9.0" y="75.0" width="3.0" height="1.4" fill="#c586c0"/>
<rect x="13.0" y="75.0" width="1.0" height="1.4" fill="#ffffff"/>
<rect x="15.0" y="75.0" width="2.0" height="1.4" fill="#c586c0"/>
<rect x="18.0" y="75.0" width="4.0" height="1.4" fill="#4ec9b0"/>
<rect x="22.0" y="75.0" width="1.0" height="1.4" fill="#ffd700"/>
<rect x="23.0" y="75.0" width="7.0" height="1.4" fill="#ffffff"/>
<rect x="30.0" y="75.0" width="1.0" height="1.4" fill="#ffd700"/>
<rect x="31.0" y="75.0" width="1.0" height="1.4" fill="#ffffff"/>
<rect x="13.3" y="77.0" width="10.0" height="1.4" fill="#ffffff"/>
<rect x="24.3" y="77.0" width="11.0" height="1.4" fill="#ffffff"/>
<rect x="36.3" y="77.0" width="10.0" height="1.4" fill="#ffffff"/>
<rect x="47.3" y="77.0" width="10.0" height="1.4" fill="#ffffff"/>
<rect x="58.3" y="77.0" width="7.4" height="1.4" fill="#ffffff"/>
<rect x="9.2" y="79.0" width="6.0" height="1.4" fill="#9cdcfe"/>
<rect x="16.2" y="79.0" width="11.0" height="1.4" fill="#ffffff"/>
<rect x="28.2" y="79.0" width="5.0" height="1.4" fill="#9cdcfe"/>
<rect x="34.2" y="79.0" width="7.0" height="1.4" fill="#9cdcfe"/>
<rect x="42.2" y="79.0" width="11.0" height="1.4" fill="#ffffff"/>
<rect x="54.2" y="79.0" width="3.0" height="1.4" fill="#ce9178"/>
<rect x="58.2" y="79.0" width="9.0" height="1.4" fill="#ce9178"/>
<rect x="68.2" y="79.0" width="10.0" height="1.4" fill="#ce9178"/>
<rect x="79.2" y="79.0" width="5.0" height="1.4" fill="#ce9178"/>
<rect x="85.2" y="79.0" width="3.0" height="1.4" fill="#ce9178"/>
<rect x="89.2" y="79.0" width="11.0" height="1.4" fill="#ce9178"/>
<rect x="101.2" y="79.0" width="2.8" height="1.4" fill="#ce9178"/>
<rect x="9.2" y="81.0" width="3.0" height="1.4" fill="#ffffff"/>
<rect x="13.2" y="81.0" width="3.0" height="1.4" fill="#ffffff"/>
<rect x="17.2" y="81.0" width="6.0" height="1.4" fill="#ffffff"/>
<rect x="24.2" y="81.0" width="6.0" height="1.4" fill="#ffffff"/>
<rect x="31.2" y="81.0" width="3.0" height="1.4" fill="#ffffff"/>
<rect x="35.2" y="81.0" width="10.0" height="1.4" fill="#ffffff"/>
<rect x="46.2" y="81.0" width="8.0" height="1.4" fill="#ffffff"/>
<rect x="55.2" y="81.0" width="9.4" height="1.4" fill="#ffffff"/>
<rect x="9.2" y="83.0" width="6.0" height="1.4" fill="#ffffff"/>
<rect x="16.2" y="83.0" width="11.0" height="1.4" fill="#ffffff"/>
<rect x="28.2" y="83.0" width="6.0" height="1.4" fill="#ffffff"/>
<rect x="35.2" y="83.0" width="7.0" height="1.4" fill="#ffffff"/>
<rect x="43.2" y="83.0" width="10.0" height="1.4" fill="#ffffff"/>
<rect x="9.2" y="85.0" width="3.0" height="1.4" fill="#c586c0"/>
<rect x="13.2" y="85.0" width="4.0" height="1.4" fill="#ffffff"/>
<rect x="18.2" y="85.0" width="7.6" height="1.4" fill="#ffffff"/>
<rect x="5.1" y="89.0" width="3.0" height="1.4" fill="#569cd6"/>
<rect x="9.1" y="89.0" width="9.0" height="1.4" fill="#dcdcaa"/>
<rect x="19.1" y="89.0" width="11.0" height="1.4" fill="#dcdcaa"/>
<rect x="31.1" y="89.0" width="4.0" height="1.4" fill="#9cdcfe"/>
<rect x="36.1" y="89.0" width="7.0" height="1.4" fill="#9cdcfe"/>
<rect x="44.1" y="89.0" width="3.1" height="1.4" fill="#9cdcfe"/>
<rect x="9.2" y="91.0" width="6.0" height="1.4" fill="#ffffff"/>
<rect x="16.2" y="91.0" width="11.0" height="1.4" fill="#ffffff"/>
<rect x="28.2" y="91.0" width="7.0" height="1.4" fill="#ffffff"/>
<rect x="36.2" y="91.0" width="3.0" height="1.4" fill="#ffffff"/>
<rect x="40.2" y="91.0" width="4.0" height="1.4" fill="#ffffff"/>
<rect x="45.2" y="91.0" width="4.0" height="1.4" fill="#ffffff"/>
<rect x="50.2" y="91.0" width="4.2" height="1.4" fill="#ffffff"/>
<rect x="9.2" y="93.0" width="4.0" height="1.4" fill="#ffffff"/>
<rect x="14.2" y="93.0" width="7.0" height="1.4" fill="#ffffff"/>
<rect x="22.2" y="93.0" width="9.0" height="1.4" fill="#ffffff"/>
<rect x="32.2" y="93.0" width="4.0" height="1.4" fill="#ffffff"/>
<rect x="37.2" y="93.0" width="3.0" height="1.4" fill="#ffffff"/>
<rect x="41.2" y="93.0" width="3.0" height="1.4" fill="#ffffff"/>
<rect x="45.2" y="93.0" width="6.0" height="1.4" fill="#ce9178"/>
<rect x="52.2" y="93.0" width="3.0" height="1.4" fill="#ce9178"/>
<rect x="56.2" y="93.0" width="9.0" height="1.4" fill="#ce9178"/>
<rect x="66.2" y="93.0" width="4.6" height="1.4" fill="#ffffff"/>
<rect x="9.2" y="95.0" width="7.0" height="1.4" fill="#ffffff"/>
<rect x="17.2" y="95.0" width="8.0" height="1.4" fill="#ffffff"/>
<rect x="26.2" y="95.0" width="4.0" height="1.4" fill="#ffffff"/>
<rect x="9.2" y="97.0" width="7.0" height="1.4" fill="#ffffff"/>
<rect x="17.2" y="97.0" width="8.0" height="1.4" fill="#ffffff"/>
<rect x="26.2" y="97.0" width="3.0" height="1.4" fill="#ffffff"/>
<rect x="30.2" y="97.0" width="9.0" height="1.4" fill="#ffffff"/>
<rect x="40.2" y="97.0" width="4.0" height="1.4" fill="#ffffff"/>
<rect x="9.2" y="99.0" width="5.0" height="1.4" fill="#c586c0"/>
<rect x="15.2" y="99.0" width="6.0" height="1.4" fill="#ffffff"/>
<rect x="22.2" y="99.0" width="4.0" height="1.4" fill="#ffffff"/>
<rect x="27.2" y="99.0" width="3.0" height="1.4" fill="#ffffff"/>
<rect x="31.2" y="99.0" width="3.0" height="1.4" fill="#ffffff"/>
<rect x="35.2" y="99.0" width="7.4" height="1.4" fill="#ffffff"/>
<rect x="13.3" y="101.0" width="10.0" height="1.4" fill="#ffffff"/>
<rect x="24.3" y="101.0" width="5.0" height="1.4" fill="#ffffff"/>
<rect x="30.3" y="101.0" width="1.1" height="1.4" fill="#ffffff"/>
<rect x="9.2" y="105.0" width="6.0" height="1.4" fill="#ffffff"/>
<rect x="16.2" y="105.0" width="10.0" height="1.4" fill="#ffffff"/>
<rect x="27.2" y="105.0" width="11.0" height="1.4" fill="#ffffff"/>
<rect x="9.2" y="107.0" width="6.0" height="1.4" fill="#ffffff"/>
<rect x="16.2" y="107.0" width="5.0" height="1.4" fill="#ffffff"/>
<rect x="22.2" y="107.0" width="9.0" height="1.4" fill="#ffffff"/>
<rect x="32.2" y="107.0" width="9.0" height="1.4" fill="#ffffff"/>
<rect x="42.2" y="107.0" width="4.0" height="1.4" fill="#ffffff"/>
<rect x="47.2" y="107.0" width="9.0" height="1.4" fill="#ffffff"/>
<rect x="57.2" y="107.0" width="9.0" height="1.4" fill="#ffffff"/>
<rect x="67.2" y="107.0" width="6.0" height="1.4" fill="#ffffff"/>
<rect x="74.2" y="107.0" width="3.0" height="1.4" fill="#ffffff"/>
<rect x="9.2" y="109.0" width="7.0" height="1.4" fill="#ffffff"/>
<rect x="17.2" y="109.0" width="7.0" height="1.4" fill="#ffffff"/>
<rect x="25.2" y="109.0" width="3.0" height="1.4" fill="#ffffff"/>
<rect x="29.2" y="109.0" width="6.0" height="1.4" fill="#ffffff"/>
<rect x="36.2" y="109.0" width="5.0" height="1.4" fill="#ffffff"/>
<rect x="42.2" y="109.0" width="9.0" height="1.4" fill="#ffffff"/>
<rect x="52.2" y="109.0" width="4.0" height="1.4" fill="#ffffff"/>
<rect x="57.2" y="109.0" width="3.0" height="1.4" fill="#ffffff"/>
<rect x="9.2" y="111.0" width="5.0" height="1.4" fill="#c586c0"/>
<rect x="15.2" y="111.0" width="6.0" height="1.4" fill="#ffffff"/>
<rect x="22.2" y="111.0" width="9.2" height="1.4" fill="#ffffff"/>
<rect x="13.3" y="113.0" width="7.0" height="1.4" fill="#ffffff"/>
<rect x="21.3" y="113.0" width="3.0" height="1.4" fill="#ffffff"/>
<rect x="25.3" y="113.0" width="8.0" height="1.4" fill="#ffffff"/>
<rect x="34.3" y="113.0" width="7.0" height="1.4" fill="#ffffff"/>
<rect x="42.3" y="113.0" width="9.0" height="1.4" fill="#ffffff"/>
<rect x="52.3" y="113.0" width="4.0" height="1.4" fill="#ffffff"/>
<rect x="57.3" y="113.0" width="4.0" height="1.4" fill="#ffffff"/>
<rect x="62.3" y="113.0" width="4.0" height="1.4" fill="#ffffff"/>
<rect x="67.3" y="113.0" width="6.0" height="1.4" fill="#ffffff"/>
<rect x="74.3" y="113.0" width="6.0" height="1.4" fill="#ffffff"/>
<rect x="81.3" y="113.0" width="3.0" height="1.4" fill="#ffffff"/>
<rect x="9.2" y="115.0" width="8.0" height="1.4" fill="#ffffff"/>
<rect x="18.2" y="115.0" width="8.0" height="1.4" fill="#ffffff"/>
<rect x="27.2" y="115.0" width="10.0" height="1.4" fill="#ffffff"/>
<rect x="38.2" y="115.0" width="5.0" height="1.4" fill="#ffffff"/>
<rect x="44.2" y="115.0" width="10.0" height="1.4" fill="#ffffff"/>
<rect x="55.2" y="115.0" width="5.0" height="1.4" fill="#ffffff"/>
<rect x="61.2" y="115.0" width="7.5" height="1.4" fill="#ffffff"/>
<rect x="9.2" y="117.0" width="5.0" height="1.4" fill="#c586c0"/>
<rect x="15.2" y="117.0" width="5.0" height="1.4" fill="#ffffff"/>
<rect x="21.2" y="117.0" width="7.0" height="1.4" fill="#ffffff"/>
<rect x="29.2" y="117.0" width="3.7" height="1.4" fill="#ffffff"/>
<rect x="5.1" y="121.0" width="3.0" height="1.4" fill="#569cd6"/>
<rect x="9.1" y="121.0" width="6.0" height="1.4" fill="#dcdcaa"/>
<rect x="16.1" y="121.0" width="5.0" height="1.4" fill="#dcdcaa"/>
<rect x="22.1" y="121.0" width="11.0" height="1.4" fill="#dcdcaa"/>
<rect x="34.1" y="121.0" width="6.0" height="1.4" fill="#9cdcfe"/>
<rect x="41.1" y="121.0" width="8.2" height="1.4" fill="#9cdcfe"/>
<rect x="9.2" y="123.0" width="10.0" height="1.4" fill="#ffffff"/>
<rect x="20.2" y="123.0" width="4.0" height="1.4" fill="#ffffff"/>
<rect x="25.2" y="123.0" width="9.0" height="1.4" fill="#ffffff"/>
<rect x="35.2" y="123.0" width="3.0" height="1.4" fill="#ffffff"/>
<rect x="39.2" y="123.0" width="4.0" height="1.4" fill="#ffffff"/>
<rect x="44.2" y="123.0" width="4.0" height="1.4" fill="#ffffff"/>
<rect x="49.2" y="123.0" width="3.0" height="1.4" fill="#ffffff"/>
<rect x="53.2" y="123.0" width="9.4" height="1.4" fill="#ffffff"/>
<rect x="9.2" y="125.0" width="7.0" height="1.4" fill="#ffffff"/>
<rect x="17.2" y="125.0" width="6.0" height="1.4" fill="#ffffff"/>
<rect x="24.2" y="125.0" width="9.0" height="1.4" fill="#ffffff"/>
<rect x="34.2" y="125.0" width="7.0" height="1.4" fill="#ffffff"/>
<rect x="42.2" y="125.0" width="1.0" height="1.4" fill="#ffffff"/>
<rect x="9.2" y="127.0" width="10.0" height="1.4" fill="#ffffff"/>
<rect x="20.2" y="127.0" width="7.0" height="1.4" fill="#ffffff"/>
<rect x="28.2" y="127.0" width="11.0" height="1.4" fill="#ffffff"/>
<rect x="40.2" y="127.0" width="5.0" height="1.4" fill="#ffffff"/>
<rect x="46.2" y="127.0" width="4.0" height="1.4" fill="#ffffff"/>
<rect x="51.2" y="127.0" width="5.0" height="1.4" fill="#ffffff"/>
<rect x="57.2" y="127.0" width="6.0" height="1.4" fill="#ffffff"/>
<rect x="64.2" y="127.0" width="10.0" height="1.4" fill="#ffffff"/>
<rect x="75.2" y="127.0" width="5.8" height="1.4" fill="#ffffff"/>
<rect x="9.2" y="129.0" width="4.0" height="1.4" fill="#ffffff"/>
<rect x="14.2" y="129.0" width="7.0" height="1.4" fill="#ffffff"/>
<rect x="22.2" y="129.0" width="6.0" height="1.4" fill="#ffffff"/>
<rect x="29.2" y="129.0" width="6.0" height="1.4" fill="#ffffff"/>
<rect x="36.2" y="129.0" width="3.0" height="1.4" fill="#ffffff"/>
<rect x="40.2" y="129.0" width="4.0" height="1.4" fill="#ffffff"/>
<rect x="45.2" y="129.0" width="7.0" height="1.4" fill="#ffffff"/>
<rect x="53.2" y="129.0" width="3.8" height="1.4" fill="#ffffff"/>
<rect x="9.2" y="131.0" width="10.0" height="1.4" fill="#ffffff"/>
<rect x="20.2" y="131.0" width="6.0" height="1.4" fill="#ffffff"/>
<rect x="27.2" y="131.0" width="3.0" height="1.4" fill="#ffffff"/>
<rect x="31.2" y="131.0" width="3.0" height="1.4" fill="#ffffff"/>
<rect x="35.2" y="131.0" width="5.0" height="1.4" fill="#ffffff"/>
<rect x="41.2" y="131.0" width="6.0" height="1.4" fill="#ffffff"/>
<rect x="9.2" y="133.0" width="8.0" height="1.4" fill="#ffffff"/>
<rect x="18.2" y="133.0" width="11.0" height="1.4" fill="#ffffff"/>
<rect x="30.2" y="133.0" width="5.0" height="1.4" fill="#ffffff"/>
<rect x="36.2" y="133.0" width="4.0" height="1.4" fill="#ffffff"/>
<rect x="41.2" y="133.0" width="8.0" height="1.4" fill="#ffffff"/>
<rect x="50.2" y="133.0" width="4.2" height="1.4" fill="#ffffff"/>
<rect x="9.2" y="135.0" width="10.0" height="1.4" fill="#ffffff"/>
<rect x="20.2" y="135.0" width="11.0" height="1.4" fill="#ffffff"/>
<rect x="32.2" y="135.0" width="5.0" height="1.4" fill="#ffffff"/>
<rect x="38.2" y="135.0" width="3.0" height="1.4" fill="#ffffff"/>
<rect x="42.2" y="135.0" width="8.0" height="1.4" fill="#ffffff"/>
<rect x="51.2" y="135.0" width="3.0" height="1.4" fill="#ce9178"/>
<rect x="55.2" y="135.0" width="3.0" height="1.4" fill="#ce9178"/>
<rect x="59.2" y="135.0" width="4.0" height="1.4" fill="#ce9178"/>
<rect x="64.2" y="135.0" width="10.0" height="1.4" fill="#ce9178"/>
<rect x="75.2" y="135.0" width="4.0" height="1.4" fill="#ce9178"/>
<rect x="80.2" y="135.0" width="7.0" height="1.4" fill="#ce9178"/>
<rect x="88.2" y="135.0" width="1.5" height="1.4" fill="#ce9178"/>
<rect x="9.2" y="137.0" width="5.0" height="1.4" fill="#ffffff"/>
<rect x="15.2" y="137.0" width="4.0" height="1.4" fill="#ffffff"/>
<rect x="20.2" y="137.0" width="4.0" height="1.4" fill="#ffffff"/>
<rect x="25.2" y="137.0" width="10.0" height="1.4" fill="#ffffff"/>
<rect x="36.2" y="137.0" width="11.0" height="1.4" fill="#ffffff"/>
<rect x="48.2" y="137.0" width="8.0" height="1.4" fill="#ffffff"/>
<rect x="57.2" y="137.0" width="1.3" height="1.4" fill="#ffffff"/>
<rect x="9.2" y="139.0" width="5.0" height="1.4" fill="#ffffff"/>
<rect x="15.2" y="139.0" width="8.0" height="1.4" fill="#ffffff"/>
<rect x="24.2" y="139.0" width="8.0" height="1.4" fill="#ffffff"/>
<rect x="33.2" y="139.0" width="4.0" height="1.4" fill="#ffffff"/>
<rect x="38.2" y="139.0" width="10.0" height="1.4" fill="#ffffff"/>
<rect x="9.2" y="141.0" width="4.0" height="1.4" fill="#c586c0"/>
<rect x="14.2" y="141.0" width="8.5" height="1.4" fill="#ffffff"/>
<rect x="5.1" y="145.0" width="3.0" height="1.4" fill="#569cd6"/>
<rect x="9.1" y="145.0" width="10.0" height="1.4" fill="#dcdcaa"/>
<rect x="20.1" y="145.0" width="3.0" height="1.4" fill="#dcdcaa"/>
<rect x="24.1" y="145.0" width="9.0" height="1.4" fill="#9cdcfe"/>
<rect x="34.1" y="145.0" width="9.0" height="1.4" fill="#9cdcfe"/>
<rect x="44.1" y="145.0" width="1.6" height="1.4" fill="#9cdcfe"/>
<rect x="9.2" y="147.0" width="4.0" height="1.4" fill="#ffffff"/>
<rect x="14.2" y="147.0" width="4.0" height="1.4" fill="#ffffff"/>
<rect x="19.2" y="147.0" width="4.0" height="1.4" fill="#ffffff"/>
<rect x="24.2" y="147.0" width="4.0" height="1.4" fill="#ffffff"/>
<rect x="29.2" y="147.0" width="7.0" height="1.4" fill="#ffffff"/>
<rect x="37.2" y="147.0" width="9.0" height="1.4" fill="#ffffff"/>
<rect x="47.2" y="147.0" width="8.0" height="1.4" fill="#ffffff"/>
<rect x="56.2" y="147.0" width="9.0" height="1.4" fill="#ffffff"/>
<rect x="66.2" y="147.0" width="10.0" height="1.4" fill="#ce9178"/>
<rect x="77.2" y="147.0" width="7.4" height="1.4" fill="#ce9178"/>
<rect x="9.2" y="149.0" width="11.0" height="1.4" fill="#ffffff"/>
<rect x="21.2" y="149.0" width="3.0" height="1.4" fill="#ffffff"/>
<rect x="25.2" y="149.0" width="7.0" height="1.4" fill="#ffffff"/>
<rect x="33.2" y="149.0" width="4.0" height="1.4" fill="#ffffff"/>
<rect x="38.2" y="149.0" width="10.0" height="1.4" fill="#ffffff"/>
<rect x="49.2" y="149.0" width="2.7" height="1.4" fill="#ffffff"/>
<rect x="9.2" y="151.0" width="6.0" height="1.4" fill="#ffffff"/>
<rect x="16.2" y="151.0" width="4.0" height="1.4" fill="#ffffff"/>
<rect x="21.2" y="151.0" width="10.0" height="1.4" fill="#ffffff"/>
<rect x="32.2" y="151.0" width="3.0" height="1.4" fill="#ffffff"/>
<rect x="36.2" y="151.0" width="5.0" height="1.4" fill="#ffffff"/>
<rect x="42.2" y="151.0" width="6.0" height="1.4" fill="#ffffff"/>
<rect x="49.2" y="151.0" width="8.0" height="1.4" fill="#ffffff"/>
<rect x="58.2" y="151.0" width="10.0" height="1.4" fill="#ce9178"/>
<rect x="69.2" y="151.0" width="10.0" height="1.4" fill="#ce9178"/>
<rect x="80.2" y="151.0" width="6.0" height="1.4" fill="#ce9178"/>
<rect x="87.2" y="151.0" width="8.0" height="1.4" fill="#ce9178"/>
<rect x="96.2" y="151.0" width="9.0" height="1.4" fill="#ce9178"/>
<rect x="106.2" y="151.0" width="6.5" height="1.4" fill="#ce9178"/>
<rect x="9.2" y="153.0" width="6.0" height="1.4" fill="#ffffff"/>
<rect x="16.2" y="153.0" width="4.5" height="1.4" fill="#ffffff"/>
<rect x="9.2" y="155.0" width="6.0" height="1.4" fill="#ffffff"/>
<rect x="16.2" y="155.0" width="1.4" height="1.4" fill="#ffffff"/>
<rect x="9.2" y="157.0" width="7.4" height="1.4" fill="#ffffff"/>
<rect x="9.2" y="159.0" width="6.0" height="1.4" fill="#c586c0"/>
<rect x="16.2" y="159.0" width="8.0" height="1.4" fill="#ffffff"/>
<rect x="25.2" y="159.0" width="1.6" height="1.4" fill="#ffffff"/>
<rect x="13.3" y="161.0" width="5.0" height="1.4" fill="#c586c0"/>
<rect x="19.3" y="161.0" width="5.0" height="1.4" fill="#ffffff"/>
<rect x="25.3" y="161.0" width="10.0" height="1.4" fill="#ffffff"/>
<rect x="36.3" y="161.0" width="8.0" height="1.4" fill="#ffffff"/>
<rect x="17.4" y="163.0" width="3.0" height="1.4" fill="#ffffff"/>
<rect x="21.4" y="163.0" width="4.0" height="1.4" fill="#ffffff"/>
<rect x="26.4" y="163.0" width="7.0" height="1.4" fill="#ffffff"/>
<rect x="34.4" y="163.0" width="5.0" height="1.4" fill="#ffffff"/>
<rect x="40.4" y="163.0" width="4.0" height="1.4" fill="#ffffff"/>
<rect x="45.4" y="163.0" width="10.0" height="1.4" fill="#ce9178"/>
<rect x="56.4" y="163.0" width="6.0" height="1.4" fill="#ffffff"/>
<rect x="17.4" y="165.0" width="9.0" height="1.4" fill="#ffffff"/>
<rect x="27.4" y="165.0" width="8.6" height="1.4" fill="#ffffff"/>
<rect x="13.3" y="167.0" width="6.0" height="1.4" fill="#c586c0"/>
<rect x="20.3" y="167.0" width="8.0" height="1.4" fill="#ffffff"/>
<rect x="29.3" y="167.0" width="10.0" height="1.4" fill="#ffffff"/>
<rect x="40.3" y="167.0" width="4.9" height="1.4" fill="#ffffff"/>
<rect x="17.4" y="169.0" width="4.0" height="1.4" fill="#ffffff"/>
<rect x="22.4" y="169.0" width="3.0" height="1.4" fill="#ffffff"/>
<rect x="26.4" y="169.0" width="7.0" height="1.4" fill="#ffffff"/>
<rect x="34.4" y="169.0" width="3.0" height="1.4" fill="#ffffff"/>
<rect x="38.4" y="169.0" width="7.0" height="1.4" fill="#ffffff"/>
<rect x="46.4" y="169.0" width="8.0" height="1.4" fill="#ce9178"/>
<rect x="55.4" y="169.0" width="3.0" height="1.4" fill="#ce9178"/>
<rect x="17.4" y="171.0" width="9.0" height="1.4" fill="#ffffff"/>
<rect x="27.4" y="171.0" width="6.6" height="1.4" fill="#ffffff"/>
<rect x="13.3" y="173.0" width="6.0" height="1.4" fill="#c586c0"/>
<rect x="20.3" y="173.0" width="3.0" height="1.4" fill="#ffffff"/>
<rect x="24.3" y="173.0" width="7.0" height="1.4" fill="#ffffff"/>
<rect x="32.3" y="173.0" width="6.0" height="1.4" fill="#ffffff"/>
<rect x="39.3" y="173.0" width="5.0" height="1.4" fill="#ffffff"/>
<rect x="17.4" y="175.0" width="3.0" height="1.4" fill="#ffffff"/>
<rect x="21.4" y="175.0" width="4.0" height="1.4" fill="#ffffff"/>
<rect x="26.4" y="175.0" width="10.0" height="1.4" fill="#ffffff"/>
<rect x="37.4" y="175.0" width="4.0" height="1.4" fill="#ffffff"/>
<rect x="42.4" y="175.0" width="11.0" height="1.4" fill="#ffffff"/>
<rect x="54.4" y="175.0" width="8.0" height="1.4" fill="#ffffff"/>
<rect x="17.4" y="177.0" width="6.0" height="1.4" fill="#ffffff"/>
<rect x="24.4" y="177.0" width="6.0" height="1.4" fill="#ffffff"/>
<rect x="31.4" y="177.0" width="1.5" height="1.4" fill="#ffffff"/>
<rect x="9.2" y="179.0" width="7.0" height="1.4" fill="#ffffff"/>
<rect x="17.2" y="179.0" width="5.0" height="1.4" fill="#4ec9b0"/>
<rect x="23.2" y="179.0" width="3.0" height="1.4" fill="#4ec9b0"/>
<rect x="27.2" y="179.0" width="10.0" height="1.4" fill="#ffffff"/>
<rect x="38.2" y="179.0" width="1.4" height="1.4" fill="#ffffff"/>
<rect x="9.2" y="181.0" width="3.0" height="1.4" fill="#ffffff"/>
<rect x="13.2" y="181.0" width="5.0" height="1.4" fill="#ffffff"/>
<rect x="19.2" y="181.0" width="6.0" height="1.4" fill="#4ec9b0"/>
<rect x="26.2" y="181.0" width="7.0" height="1.4" fill="#4ec9b0"/>
<rect x="34.2" y="181.0" width="8.0" height="1.4" fill="#ffffff"/>
<rect x="43.2" y="181.0" width="10.7" height="1.4" fill="#ffffff"/>
<rect x="13.3" y="183.0" width="6.0" height="1.4" fill="#c586c0"/>
<rect x="20.3" y="183.0" width="11.0" height="1.4" fill="#ffffff"/>
<rect x="32.3" y="183.0" width="3.7" height="1.4" fill="#ffffff"/>
<rect x="17.4" y="185.0" width="9.0" height="1.4" fill="#ffffff"/>
<rect x="27.4" y="185.0" width="3.5" height="1.4" fill="#ffffff"/>
<rect x="21.7" y="187.0" width="4.0" height="1.4" fill="#ffffff"/>
<rect x="26.7" y="187.0" width="9.0" height="1.4" fill="#ffffff"/>
<rect x="36.7" y="187.0" width="6.0" height="1.4" fill="#ffffff"/>
<rect x="9.2" y="189.0" width="5.0" height="1.4" fill="#ffffff"/>
<rect x="15.2" y="189.0" width="10.0" height="1.4" fill="#ffffff"/>
<rect x="26.2" y="189.0" width="10.0" height="1.4" fill="#4ec9b0"/>
<rect x="37.2" y="189.0" width="6.0" height="1.4" fill="#ffffff"/>
<rect x="9.2" y="191.0" width="3.0" height="1.4" fill="#ffffff"/>
<rect x="13.2" y="191.0" width="9.0" height="1.4" fill="#ffffff"/>
<rect x="23.2" y="191.0" width="11.0" height="1.4" fill="#4ec9b0"/>
<rect x="35.2" y="191.0" width="11.0" height="1.4" fill="#ffffff"/>
<rect x="47.2" y="191.0" width="6.7" height="1.4" fill="#ffffff"/>
<rect x="13.3" y="193.0" width="6.0" height="1.4" fill="#c586c0"/>
<rect x="20.3" y="193.0" width="8.0" height="1.4" fill="#ffffff"/>
<rect x="29.3" y="193.0" width="6.0" height="1.4" fill="#ffffff"/>
<rect x="17.4" y="195.0" width="4.0" height="1.4" fill="#ffffff"/>
<rect x="22.4" y="195.0" width="4.0" height="1.4" fill="#ffffff"/>
<rect x="27.4" y="195.0" width="3.5" height="1.4" fill="#ffffff"/>
<rect x="21.7" y="197.0" width="6.0" height="1.4" fill="#ffffff"/>
<rect x="28.7" y="197.0" width="9.0" height="1.4" fill="#ffffff"/>
<rect x="38.7" y="197.0" width="4.0" height="1.4" fill="#ffffff"/>
<rect x="9.2" y="199.0" width="7.0" height="1.4" fill="#ffffff"/>
<rect x="17.2" y="199.0" width="11.0" height="1.4" fill="#4ec9b0"/>
<rect x="29.2" y="199.0" width="8.0" height="1.4" fill="#ffffff"/>
<rect x="38.2" y="199.0" width="3.9" height="1.4" fill="#ffffff"/>
<rect x="9.2" y="201.0" width="3.0" height="1.4" fill="#ffffff"/>
<rect x="13.2" y="201.0" width="8.0" height="1.4" fill="#ffffff"/>
<rect x="22.2" y="201.0" width="11.0" height="1.4" fill="#4ec9b0"/>
<rect x="34.2" y="201.0" width="4.0" height="1.4" fill="#4ec9b0"/>
<rect x="39.2" y="201.0" width="3.0" height="1.4" fill="#ffffff"/>
<rect x="43.2" y="201.0" width="10.0" height="1.4" fill="#ffffff"/>
<rect x="54.2" y="201.0" width="1.7" height="1.4" fill="#ffffff"/>
<rect x="13.3" y="203.0" width="6.0" height="1.4" fill="#c586c0"/>
<rect x="20.3" y="203.0" width="9.0" height="1.4" fill="#ffffff"/>
<rect x="30.3" y="203.0" width="6.7" height="1.4" fill="#ffffff"/>
<rect x="17.4" y="205.0" width="10.0" height="1.4" fill="#ffffff"/>
<rect x="28.4" y="205.0" width="3.0" height="1.4" fill="#ffffff"/>
<rect x="21.7" y="207.0" width="6.0" height="1.4" fill="#ffffff"/>
<rect x="28.7" y="207.0" width="4.0" height="1.4" fill="#ffffff"/>
<rect x="33.7" y="207.0" width="9.0" height="1.4" fill="#ffffff"/>
<rect x="9.2" y="209.0" width="3.0" height="1.4" fill="#ffffff"/>
<rect x="13.2" y="209.0" width="5.0" height="1.4" fill="#ffffff"/>
<rect x="19.2" y="209.0" width="11.0" height="1.4" fill="#ffffff"/>
<rect x="31.2" y="209.0" width="8.0" height="1.4" fill="#ffffff"/>
<rect x="40.2" y="209.0" width="5.0" height="1.4" fill="#ffffff"/>
<rect x="46.2" y="209.0" width="10.0" height="1.4" fill="#ffffff"/>
<rect x="57.2" y="209.0" width="5.0" height="1.4" fill="#ffffff"/>
<rect x="63.2" y="209.0" width="3.5" height="1.4" fill="#ffffff"/>
<rect x="9.2" y="211.0" width="11.0" height="1.4" fill="#ffffff"/>
<rect x="21.2" y="211.0" width="10.0" height="1.4" fill="#ffffff"/>
<rect x="32.2" y="211.0" width="10.0" height="1.4" fill="#ffffff"/>
<rect x="43.2" y="211.0" width="4.0" height="1.4" fill="#ffffff"/>
<rect x="48.2" y="211.0" width="10.0" height="1.4" fill="#ffffff"/>
<rect x="59.2" y="211.0" width="7.0" height="1.4" fill="#ce9178"/>
<rect x="67.2" y="211.0" width="11.0" height="1.4" fill="#ce9178"/>
<rect x="79.2" y="211.0" width="5.0" height="1.4" fill="#ce9178"/>
<rect x="85.2" y="211.0" width="11.0" height="1.4" fill="#ce9178"/>
<rect x="97.2" y="211.0" width="9.9" height="1.4" fill="#ce9178"/>
<rect x="5.1" y="215.0" width="3.0" height="1.4" fill="#569cd6"/>
<rect x="9.1" y="215.0" width="7.0" height="1.4" fill="#dcdcaa"/>
<rect x="17.1" y="215.0" width="7.0" height="1.4" fill="#dcdcaa"/>
<rect x="25.1" y="215.0" width="8.3" height="1.4" fill="#9cdcfe"/>
<rect x="9.2" y="217.0" width="3.3" height="1.4" fill="#c586c0"/>
<rect x="13.3" y="219.0" width="7.0" height="1.4" fill="#7ca668"/>
<rect x="21.3" y="219.0" width="5.0" height="1.4" fill="#7ca668"/>
<rect x="27.3" y="219.0" width="11.0" height="1.4" fill="#7ca668"/>
<rect x="39.3" y="219.0" width="11.0" height="1.4" fill="#7ca668"/>
<rect x="13.3" y="221.0" width="7.0" height="1.4" fill="#ffffff"/>
<rect x="21.3" y="221.0" width="10.0" height="1.4" fill="#ffffff"/>
<rect x="32.3" y="221.0" width="6.0" height="1.4" fill="#ffffff"/>
<rect x="39.3" y="221.0" width="9.0" height="1.4" fill="#ffffff"/>
<rect x="49.3" y="221.0" width="11.0" height="1.4" fill="#ce9178"/>
<rect x="61.3" y="221.0" width="3.0" height="1.4" fill="#ce9178"/>
<rect x="65.3" y="221.0" width="3.0" height="1.4" fill="#ce9178"/>
<rect x="69.3" y="221.0" width="3.0" height="1.4" fill="#ce9178"/>
<rect x="13.3" y="223.0" width="9.0" height="1.4" fill="#ffffff"/>
<rect x="23.3" y="223.0" width="7.6" height="1.4" fill="#ffffff"/>
<rect x="13.3" y="227.0" width="4.0" height="1.4" fill="#7ca668"/>
<rect x="18.3" y="227.0" width="10.0" height="1.4" fill="#7ca668"/>
<rect x="29.3" y="227.0" width="4.0" height="1.4" fill="#7ca668"/>
<rect x="34.3" y="227.0" width="5.0" height="1.4" fill="#7ca668"/>
<rect x="40.3" y="227.0" width="4.0" height="1.4" fill="#7ca668"/>
<rect x="45.3" y="227.0" width="11.0" height="1.4" fill="#7ca668"/>
<rect x="57.3" y="227.0" width="10.0" height="1.4" fill="#7ca668"/>
<rect x="68.3" y="227.0" width="9.0" height="1.4" fill="#7ca668"/>
<rect x="13.3" y="229.0" width="9.0" height="1.4" fill="#ffffff"/>
<rect x="23.3" y="229.0" width="7.0" height="1.4" fill="#ffffff"/>
<rect x="31.3" y="229.0" width="6.0" height="1.4" fill="#4ec9b0"/>
<rect x="38.3" y="229.0" width="10.0" height="1.4" fill="#ffffff"/>
<rect x="49.3" y="229.0" width="10.0" height="1.4" fill="#ce9178"/>
<rect x="60.3" y="229.0" width="5.0" height="1.4" fill="#ffffff"/>
<rect x="66.3" y="229.0" width="8.0" height="1.4" fill="#ffffff"/>
<rect x="75.3" y="229.0" width="1.6" height="1.4" fill="#ffffff"/>
<rect x="13.3" y="231.0" width="10.0" height="1.4" fill="#ffffff"/>
<rect x="24.3" y="231.0" width="11.0" height="1.4" fill="#ffffff"/>
<rect x="36.3" y="231.0" width="8.0" height="1.4" fill="#ffffff"/>
<rect x="45.3" y="231.0" width="4.0" height="1.4" fill="#ce9178"/>
<rect x="50.3" y="231.0" width="6.0" height="1.4" fill="#ce9178"/>
<rect x="57.3" y="231.0" width="9.0" height="1.4" fill="#ffffff"/>
<rect x="67.3" y="231.0" width="3.0" height="1.4" fill="#ffffff"/>
<rect x="71.3" y="231.0" width="4.6" height="1.4" fill="#ffffff"/>
<rect x="13.3" y="233.0" width="5.0" height="1.4" fill="#ffffff"/>
<rect x="19.3" y="233.0" width="3.0" height="1.4" fill="#ffffff"/>
<rect x="23.3" y="233.0" width="3.0" height="1.4" fill="#ffffff"/>
<rect x="27.3" y="233.0" width="6.0" height="1.4" fill="#ffffff"/>
<rect x="34.3" y="233.0" width="5.0" height="1.4" fill="#ffffff"/>
<rect x="40.3" y="233.0" width="6.0" height="1.4" fill="#ce9178"/>
<rect x="47.3" y="233.0" width="3.0" height="1.4" fill="#ce9178"/>
<rect x="51.3" y="233.0" width="7.0" height="1.4" fill="#ffffff"/>
<rect x="59.3" y="233.0" width="8.0" height="1.4" fill="#ffffff"/>
<rect x="68.3" y="233.0" width="4.5" height="1.4" fill="#ffffff"/>
<rect x="13.3" y="237.0" width="6.0" height="1.4" fill="#ffffff"/>
<rect x="20.3" y="237.0" width="10.0" height="1.4" fill="#ffffff"/>
<rect x="31.3" y="237.0" width="4.0" height="1.4" fill="#ffffff"/>
<rect x="36.3" y="237.0" width="10.0" height="1.4" fill="#ffffff"/>
<rect x="47.3" y="237.0" width="4.0" height="1.4" fill="#ffffff"/>
<rect x="13.3" y="241.0" width="11.0" height="1.4" fill="#ffffff"/>
<rect x="25.3" y="241.0" width="7.0" height="1.4" fill="#ffffff"/>
<rect x="33.3" y="241.0" width="6.0" height="1.4" fill="#ffffff"/>
<rect x="40.3" y="241.0" width="11.0" height="1.4" fill="#ffffff"/>
<rect x="13.3" y="243.0" width="9.0" height="1.4" fill="#ffffff"/>
<rect x="23.3" y="243.0" width="3.0" height="1.4" fill="#569cd6"/>
<rect x="27.3" y="243.0" width="9.0" height="1.4" fill="#ffffff"/>
<rect x="37.3" y="243.0" width="9.0" height="1.4" fill="#ffffff"/>
<rect x="47.3" y="243.0" width="10.2" height="1.4" fill="#ffffff"/>
<rect x="13.3" y="245.0" width="5.0" height="1.4" fill="#ffffff"/>
<rect x="19.3" y="245.0" width="11.0" height="1.4" fill="#569cd6"/>
<rect x="31.3" y="245.0" width="6.0" height="1.4" fill="#ffffff"/>
<rect x="38.3" y="245.0" width="11.0" height="1.4" fill="#ffffff"/>
<rect x="50.3" y="245.0" width="3.1" height="1.4" fill="#ffffff"/>
<rect x="13.3" y="247.0" width="11.0" height="1.4" fill="#9cdcfe"/>
<rect x="25.3" y="247.0" width="6.0" height="1.4" fill="#7ca668"/>
<rect x="32.3" y="247.0" width="11.0" height="1.4" fill="#7ca668"/>
<rect x="44.3" y="247.0" width="5.0" height="1.4" fill="#7ca668"/>
<rect x="50.3" y="247.0" width="6.0" height="1.4" fill="#7ca668"/>
<rect x="57.3" y="247.0" width="8.0" height="1.4" fill="#7ca668"/>
<rect x="13.3" y="251.0" width="5.0" height="1.4" fill="#ffffff"/>
<rect x="19.3" y="251.0" width="8.0" height="1.4" fill="#ffffff"/>
<rect x="28.3" y="251.0" width="8.0" height="1.4" fill="#ffffff"/>
<rect x="37.3" y="251.0" width="6.0" height="1.4" fill="#ffffff"/>
<rect x="13.3" y="255.0" width="6.0" height="1.4" fill="#ffffff"/>
<rect x="20.3" y="255.0" width="6.0" height="1.4" fill="#ffffff"/>
<rect x="27.3" y="255.0" width="4.0" height="1.4" fill="#ffffff"/>
<rect x="32.3" y="255.0" width="5.0" height="1.4" fill="#ffffff"/>
<rect x="38.3" y="255.0" width="6.0" height="1.4" fill="#ffffff"/>
<rect x="45.3" y="255.0" width="5.0" height="1.4" fill="#ffffff"/>
<rect x="51.3" y="255.0" width="4.0" height="1.4" fill="#ce9178"/>
<rect x="56.3" y="255.0" width="4.0" height="1.4" fill="#ce9178"/>
<rect x="61.3" y="255.0" width="9.0" height="1.4" fill="#ce9178"/>
<rect x="71.3" y="255.0" width="2.6" height="1.4" fill="#ce9178"/>
<rect x="13.3" y="257.0" width="3.0" height="1.4" fill="#c586c0"/>
<rect x="17.3" y="257.0" width="4.0" height="1.4" fill="#ffffff"/>
<rect x="9.2" y="259.0" width="6.0" height="1.4" fill="#c586c0"/>
<rect x="16.2" y="259.0" width="8.0" height="1.4" fill="#ffffff"/>
<rect x="25.2" y="259.0" width="5.2" height="1.4" fill="#ffffff"/>
<rect x="13.3" y="261.0" width="4.0" height="1.4" fill="#ffffff"/>
<rect x="18.3" y="261.0" width="11.0" height="1.4" fill="#ffffff"/>
<rect x="30.3" y="261.0" width="8.0" height="1.4" fill="#ffffff"/>
<rect x="39.3" y="261.0" width="11.0" height="1.4" fill="#ffffff"/>
<rect x="51.3" y="261.0" width="6.0" height="1.4" fill="#ffffff"/>
<rect x="58.3" y="261.0" width="3.8" height="1.4" fill="#ce9178"/>
<rect x="1.0" y="265.0" width="3.0" height="1.4" fill="#ffffff"/>
<rect x="5.0" y="265.0" width="11.0" height="1.4" fill="#ffffff"/>
<rect x="17.0" y="265.0" width="11.0" height="1.4" fill="#ffffff"/>
<rect x="29.0" y="265.0" width="10.0" height="1.4" fill="#ffffff"/>
<rect x="40.0" y="265.0" width="5.0" height="1.4" fill="#ce9178"/>
<rect x="46.0" y="265.0" width="4.0" height="1.4" fill="#ce9178"/>
<rect x="51.0" y="265.0" width="5.0" height="1.4" fill="#ffffff"/>
<rect x="57.0" y="265.0" width="4.0" height="1.4" fill="#ce9178"/>
<rect x="62.0" y="265.0" width="2.6" height="1.4" fill="#ffffff"/>
<rect x="23.2" y="267.0" width="10.0" height="1.4" fill="#ffffff"/>
<rect x="34.2" y="267.0" width="4.0" height="1.4" fill="#ffffff"/>
<rect x="39.2" y="267.0" width="4.0" height="1.4" fill="#ffffff"/>
<rect x="44.2" y="267.0" width="8.0" height="1.4" fill="#ffffff"/>
<rect x="53.2" y="267.0" width="9.0" height="1.4" fill="#ce9178"/>
<rect x="63.2" y="267.0" width="10.6" height="1.4" fill="#ce9178"/>
<rect x="23.2" y="269.0" width="6.0" height="1.4" fill="#ffffff"/>
<rect x="30.2" y="269.0" width="8.0" height="1.4" fill="#ffffff"/>
<rect x="39.2" y="269.0" width="3.0" height="1.4" fill="#ffffff"/>
<rect x="43.2" y="269.0" width="3.0" height="1.4" fill="#ffffff"/>
<rect x="47.2" y="269.0" width="5.0" height="1.4" fill="#ce9178"/>
<rect x="53.2" y="269.0" width="1.7" height="1.4" fill="#ffffff"/>
<rect x="1.0" y="273.0" width="9.0" height="1.4" fill="#dcdcaa"/>
<rect x="11.0" y="273.0" width="6.0" height="1.4" fill="#dcdcaa"/>
<rect x="18.0" y="273.0" width="5.0" height="1.4" fill="#dcdcaa"/>
<rect x="24.0" y="273.0" width="4.0" height="1.4" fill="#dcdcaa"/>
<rect x="29.0" y="273.0" width="11.0" height="1.4" fill="#dcdcaa"/>
<rect x="41.0" y="273.0" width="3.0" height="1.4" fill="#ce9178"/>
<rect x="45.0" y="273.0" width="2.7" height="1.4" fill="#ce9178"/>
<rect x="1.0" y="275.0" width="3.0" height="1.4" fill="#569cd6"/>
<rect x="5.0" y="275.0" width="9.0" height="1.4" fill="#dcdcaa"/>
<rect x="15.0" y="275.0" width="6.0" height="1.4" fill="#9cdcfe"/>
<rect x="5.1" y="277.0" width="3.3" height="1.4" fill="#c586c0"/>
<rect x="9.2" y="279.0" width="8.0" height="1.4" fill="#ffffff"/>
<rect x="18.2" y="279.0" width="7.0" height="1.4" fill="#ffffff"/>
<rect x="26.2" y="279.0" width="7.0" height="1.4" fill="#ffffff"/>
<rect x="34.2" y="279.0" width="4.0" height="1.4" fill="#ffffff"/>
<rect x="39.2" y="279.0" width="5.0" height="1.4" fill="#ffffff"/>
<rect x="45.2" y="279.0" width="9.0" height="1.4" fill="#ce9178"/>
<rect x="55.2" y="279.0" width="0.7" height="1.4" fill="#ffffff"/>
<rect x="9.2" y="281.0" width="6.0" height="1.4" fill="#c586c0"/>
<rect x="16.2" y="281.0" width="9.0" height="1.4" fill="#ffffff"/>
<rect x="26.2" y="281.0" width="1.6" height="1.4" fill="#ffffff"/>
<rect x="13.3" y="283.0" width="9.0" height="1.4" fill="#9cdcfe"/>
<rect x="23.3" y="283.0" width="5.0" height="1.4" fill="#9cdcfe"/>
<rect x="29.3" y="283.0" width="8.0" height="1.4" fill="#ffffff"/>
<rect x="38.3" y="283.0" width="4.0" height="1.4" fill="#9cdcfe"/>
<rect x="43.3" y="283.0" width="8.0" height="1.4" fill="#ffffff"/>
<rect x="52.3" y="283.0" width="3.0" height="1.4" fill="#ce9178"/>
<rect x="56.3" y="283.0" width="6.0" height="1.4" fill="#ce9178"/>
<rect x="63.3" y="283.0" width="7.0" height="1.4" fill="#ce9178"/>
<rect x="71.3" y="283.0" width="7.0" height="1.4" fill="#ce9178"/>
<rect x="79.3" y="283.0" width="8.0" height="1.4" fill="#ce9178"/>
<rect x="88.3" y="283.0" width="2.4" height="1.4" fill="#ce9178"/>
<rect x="9.2" y="285.0" width="9.0" height="1.4" fill="#ffffff"/>
<rect x="19.2" y="285.0" width="5.0" height="1.4" fill="#ffffff"/>
<rect x="25.2" y="285.0" width="11.0" height="1.4" fill="#ffffff"/>
<rect x="37.2" y="285.0" width="4.0" height="1.4" fill="#ffffff"/>
<rect x="42.2" y="285.0" width="1.5" height="1.4" fill="#ffffff"/>
<rect x="9.2" y="287.0" width="11.0" height="1.4" fill="#ffffff"/>
<rect x="21.2" y="287.0" width="9.2" height="1.4" fill="#ffffff"/>
<rect x="9.2" y="289.0" width="6.0" height="1.4" fill="#ffffff"/>
<rect x="16.2" y="289.0" width="4.0" height="1.4" fill="#ffffff"/>
<rect x="21.2" y="289.0" width="9.0" height="1.4" fill="#ffffff"/>
<rect x="31.2" y="289.0" width="3.0" height="1.4" fill="#ffffff"/>
<rect x="35.2" y="289.0" width="4.0" height="1.4" fill="#ce9178"/>
<rect x="40.2" y="289.0" width="6.0" height="1.4" fill="#ce9178"/>
<rect x="47.2" y="289.0" width="7.2" height="1.4" fill="#ce9178"/>
<rect x="9.2" y="291.0" width="6.0" height="1.4" fill="#ffffff"/>
<rect x="16.2" y="291.0" width="9.0" height="1.4" fill="#ffffff"/>
<rect x="26.2" y="291.0" width="3.0" height="1.4" fill="#ffffff"/>
<rect x="30.2" y="291.0" width="4.0" height="1.4" fill="#ffffff"/>
<rect x="35.2" y="291.0" width="7.0" height="1.4" fill="#ce9178"/>
<rect x="43.2" y="291.0" width="8.0" height="1.4" fill="#ce9178"/>
<rect x="52.2" y="291.0" width="3.7" height="1.4" fill="#ce9178"/>
<rect x="5.1" y="293.0" width="6.0" height="1.4" fill="#c586c0"/>
<rect x="12.1" y="293.0" width="4.0" height="1.4" fill="#ffffff"/>
<rect x="17.1" y="293.0" width="9.2" height="1.4" fill="#ffffff"/>
<rect x="9.2" y="295.0" width="4.0" height="1.4" fill="#ffffff"/>
<rect x="14.2" y="295.0" width="11.0" height="1.4" fill="#ffffff"/>
<rect x="26.2" y="295.0" width="3.0" height="1.4" fill="#ffffff"/>
<rect x="30.2" y="295.0" width="9.0" height="1.4" fill="#ffffff"/>
<rect x="40.2" y="295.0" width="1.9" height="1.4" fill="#ce9178"/>
<rect x="1.0" y="299.0" width="5.0" height="1.4" fill="#c586c0"/>
<rect x="7.0" y="299.0" width="10.0" height="1.4" fill="#ffffff"/>
<rect x="18.0" y="299.0" width="8.8" height="1.4" fill="#ffffff"/>
<rect x="5.1" y="301.0" width="3.0" height="1.4" fill="#ffffff"/>
<rect x="9.1" y="301.0" width="9.0" height="1.4" fill="#ffffff"/>
<rect x="19.1" y="301.0" width="10.0" height="1.4" fill="#ffffff"/>
<rect x="30.1" y="301.0" width="9.0" height="1.4" fill="#ffffff"/>
<rect x="40.1" y="301.0" width="7.0" height="1.4" fill="#ce9178"/>
<rect x="48.1" y="301.0" width="2.7" height="1.4" fill="#ce9178"/>
</svg></div>
<div id="scroll" class="abs"></div><div id="sbl" class="abs"></div>
<div id="status" class="abs">
<svg class="abs" style="left:11px;top:6px" width="17" height="15" viewBox="0 0 17 15"><path d="M3.1 4.6L8.2 9.5L3.1 14.4M13.9 0.1L9.2 4.9L13.9 9.7" fill="none" stroke="#fff" stroke-width="1.4" transform="translate(0,-1.5)"/></svg>
<svg class="abs" style="left:51px;top:4px" width="17" height="17" viewBox="0 0 17 17"><circle cx="8.5" cy="8.5" r="7.4" fill="none" stroke="#fff" stroke-width="1.3"/><path d="M5.3 5.3L11.7 11.7M11.7 5.3L5.3 11.7" stroke="#fff" stroke-width="1.3"/></svg>
<span class="it" style="left:72px;transform:scaleX(.9)">0</span>
<svg class="abs" style="left:85px;top:4px" width="17" height="16" viewBox="0 0 17 16"><path d="M8.5 1.4L15.8 14.3H1.2z" fill="none" stroke="#fff" stroke-width="1.3" stroke-linejoin="round"/><path d="M8.5 5.8V10.4M8.5 11.6V13" stroke="#fff" stroke-width="1.3"/></svg>
<span class="it" style="left:106.3px;transform:scaleX(.9)">0</span>
<svg class="abs" style="left:135px;top:4px" width="17" height="17" viewBox="0 0 17 17"><g fill="none" stroke="#fff" stroke-width="1.4"><path d="M8.5 7L4.8 16.2M8.5 7L12.2 16.2M6 13H11"/><circle cx="8.5" cy="5.7" r="1.3"/><path d="M5.3 2.5a4.5 4.5 0 0 0 0 6.4M11.7 2.5a4.5 4.5 0 0 1 0 6.4M3.2 0.8a7.2 7.2 0 0 0 0 9.8M13.8 0.8a7.2 7.2 0 0 1 0 9.8"/></g></svg>
<span class="it" style="left:156px;transform:scaleX(.9)">0</span>
<span class="it" style="left:1551px;transform:scaleX(.95)">Ln 1, Col 1</span>
<span class="it" style="left:1640px;transform:scaleX(.915)">Spaces: 4</span>
<span class="it" style="left:1720.5px;transform:scaleX(.955)">UTF-8</span>
<span class="it" style="left:1780.5px;transform:scaleX(.86)">LF</span>
<span class="it" style="left:1815px;transform:scaleX(1.01)">Python</span>
<svg class="abs" style="left:1882px;top:4px" width="17" height="18" viewBox="0 0 17 18"><path d="M3.5 12.5V7.5a5 5 0 0 1 10 0V12.5L15.3 14.3H1.7z" fill="none" stroke="#fff" stroke-width="1.4" stroke-linejoin="round"/><path d="M6.8 15.2a1.8 1.8 0 0 0 3.4 0" fill="none" stroke="#fff" stroke-width="1.3"/></svg>
</div>
</body>
</html>
